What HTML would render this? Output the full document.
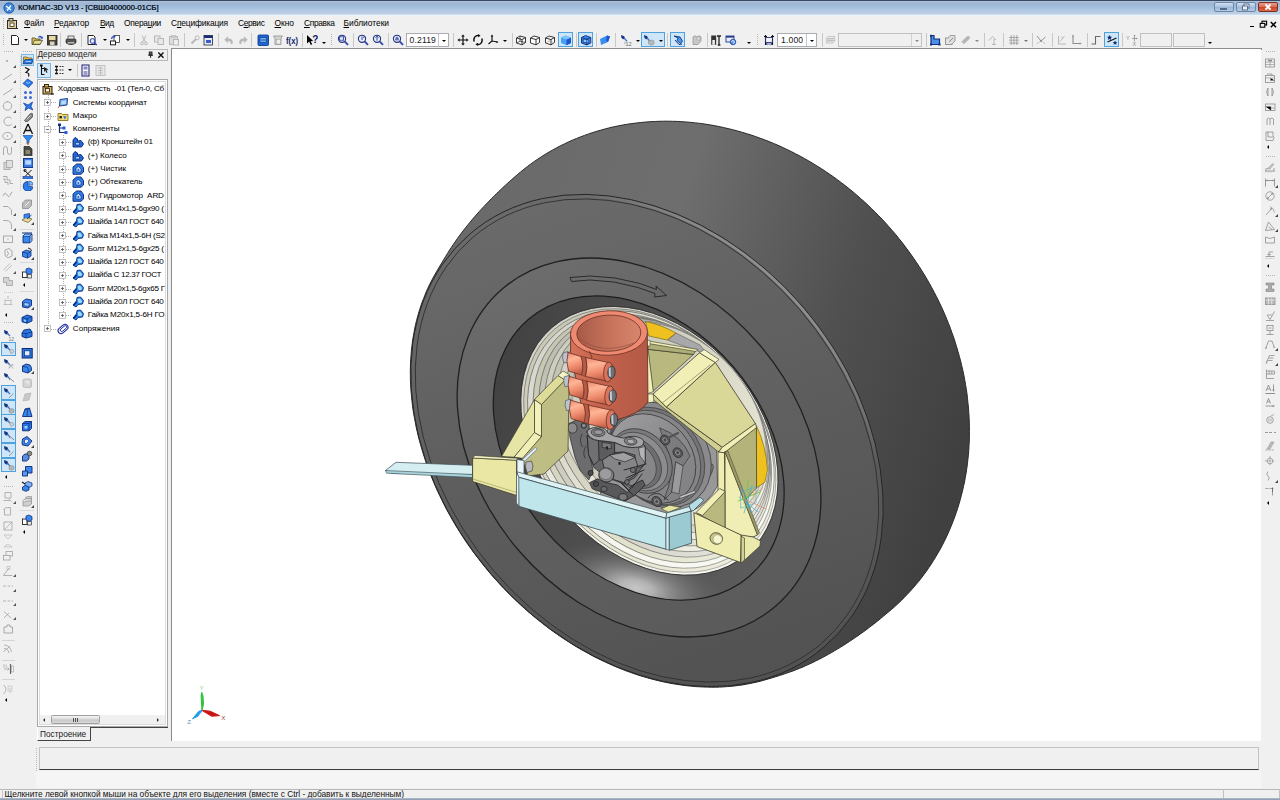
<!DOCTYPE html>
<html><head><meta charset="utf-8"><title>KOMPAS-3D</title>
<style>
html,body{margin:0;padding:0;}
body{width:1280px;height:800px;overflow:hidden;background:#f0f0f0;font-family:"Liberation Sans",sans-serif;position:relative;}
.a{position:absolute;}
.t{position:absolute;white-space:nowrap;color:#000;line-height:1;}

.sep{position:absolute;width:1px;background:#c8c8c8;}
.hl{position:absolute;background:#cfe6f8;border:1px solid #4fa2de;box-sizing:border-box;}
.fld{position:absolute;background:#fff;border:1px solid #abadb3;box-sizing:border-box;}
.fldg{position:absolute;background:#f0f0f0;border:1px solid #c0c0c0;box-sizing:border-box;}
.tr{position:absolute;white-space:pre;font-size:8.1px;line-height:10px;color:#000;}
.mn{position:absolute;white-space:nowrap;font-size:8.4px;line-height:10px;color:#000;top:18px;}
.mn u{text-decoration:underline;text-decoration-thickness:0.6px;text-underline-offset:1px;}
.grip{position:absolute;}

</style></head><body>
<div class="a" style="left:0;top:0;width:1280px;height:16px;background:linear-gradient(to bottom,#34455d 0,#3a4c66 0.9px,#afc2da 1.3px,#a6bad4 2.2px,#a0b6d1 3.5px,#a0bbd9 6px,#a8c4e0 8.5px,#b2cae3 10.5px,#bacde2 12.5px,#c0d0e2 14.2px,#e6f0fb 14.9px,#ecf4fc 15.6px,#f0f0f0 16px);"></div>
<svg class="a" style="left:3px;top:2px" width="12" height="12" viewBox="0 0 12 12"><circle cx="6" cy="6" r="5.2" fill="#3d86d8" stroke="#1b4f9c" stroke-width="0.8"/><path d="M3 4 L8 8 M8 3.5 L4 8.5" stroke="#fff" stroke-width="1.3" fill="none"/></svg>
<div class="t" style="left:18px;top:3.5px;font-size:7.7px;color:#0f1828;letter-spacing:-0.03px;text-shadow:0.2px 0 0 #0f1828;">КОМПАС-3D V13 - [СВШ0400000-01СБ]</div>
<div class="a" style="left:1214px;top:2px;width:20px;height:10px;border:1px solid #6d86a6;border-radius:2px;box-sizing:border-box;background:linear-gradient(#cfe0f1,#a8c2e0 50%,#98b6d8 50%,#b4cde8);"></div>
<div class="a" style="left:1220px;top:8px;width:7px;height:2px;background:#fff;border:0.5px solid #566b88;box-sizing:border-box;"></div>
<div class="a" style="left:1236px;top:2px;width:20px;height:10px;border:1px solid #6d86a6;border-radius:2px;box-sizing:border-box;background:linear-gradient(#cfe0f1,#a8c2e0 50%,#98b6d8 50%,#b4cde8);"></div>
<svg class="a" style="left:1241px;top:3px" width="10" height="8" viewBox="0 0 10 8"><rect x="3" y="1" width="5" height="4" fill="#e8eef6" stroke="#465a78" stroke-width="0.8"/><rect x="1.5" y="3" width="5" height="4" fill="#e8eef6" stroke="#465a78" stroke-width="0.8"/></svg>
<div class="a" style="left:1258px;top:2px;width:20px;height:10px;border:1px solid #7a3024;border-radius:2px;box-sizing:border-box;background:linear-gradient(#e9a090,#d76a52 50%,#c6432a 50%,#d9674c);"></div>
<svg class="a" style="left:1263px;top:3px" width="10" height="8" viewBox="0 0 10 8"><path d="M2.5 1.5 L7.5 6.5 M7.5 1.5 L2.5 6.5" stroke="#fff" stroke-width="1.8"/></svg>
<div class="a" style="left:3px;top:18px;width:1px;height:11px;background:repeating-linear-gradient(to bottom,#b4b4b4 0 1px,transparent 1px 2px);"></div>
<svg class="a" style="left:6px;top:17px" width="13" height="13" viewBox="0 0 13 13"><rect x="1.5" y="3.5" width="9" height="8" fill="#e8d49a" stroke="#2a2a2a" stroke-width="1"/><rect x="3" y="1.5" width="4" height="2.5" fill="#e8d49a" stroke="#2a2a2a" stroke-width="0.9"/><rect x="4" y="6" width="4" height="3.5" fill="#fff" stroke="#2a2a2a" stroke-width="0.8"/><path d="M9 11.5 l3 0" stroke="#2a2a2a" stroke-width="1"/></svg>
<div class="mn" style="left:24px;letter-spacing:-0.152px;"><u>Ф</u>айл</div>
<div class="mn" style="left:54px;letter-spacing:-0.133px;"><u>Р</u>едактор</div>
<div class="mn" style="left:100px;letter-spacing:-0.557px;"><u>В</u>ид</div>
<div class="mn" style="left:124px;letter-spacing:-0.273px;">Опера<u>ц</u>ии</div>
<div class="mn" style="left:171px;letter-spacing:-0.152px;">С<u>п</u>ецификация</div>
<div class="mn" style="left:238px;letter-spacing:-0.37px;">С<u>е</u>рвис</div>
<div class="mn" style="left:274.5px;letter-spacing:0.008px;"><u>О</u>кно</div>
<div class="mn" style="left:304px;letter-spacing:-0.339px;"><u>С</u>правка</div>
<div class="mn" style="left:343.5px;letter-spacing:0.011px;"><u>Б</u>иблиотеки</div>
<div class="a" style="left:1250px;top:25.5px;width:4px;height:1.6px;background:#000;"></div>
<svg class="a" style="left:1259px;top:20px" width="9" height="9" viewBox="0 0 9 9"><rect x="3" y="1.2" width="4.6" height="3.8" fill="none" stroke="#000" stroke-width="1.1"/><rect x="1.2" y="3.4" width="4.6" height="3.8" fill="#f0f0f0" stroke="#000" stroke-width="1.1"/></svg>
<svg class="a" style="left:1269px;top:20px" width="9" height="9" viewBox="0 0 9 9"><path d="M1.8 2 L7 7.2 M7 2 L1.8 7.2" stroke="#000" stroke-width="1.5"/></svg>
<div class="a" style="left:3px;top:34px;width:1px;height:11px;background:repeating-linear-gradient(to bottom,#b4b4b4 0 1px,transparent 1px 2px);"></div>
<svg class="a" style="left:9.0px;top:33.5px" width="12" height="12" viewBox="0 0 12 12"><path d="M2.5 1.5 h5 l2 2 v7 h-7 z" fill="#fff" stroke="#222" stroke-width="1"/></svg>
<div class="a" style="left:24px;top:38.5px;width:0;height:0;border-left:2px solid transparent;border-right:2px solid transparent;border-top:2.5px solid #000;"></div>
<svg class="a" style="left:31.0px;top:33.5px" width="12" height="12" viewBox="0 0 12 12"><path d="M1 4 h3 l1 1 h4 v5.5 h-8 z" fill="#d8c060" stroke="#4a4a20" stroke-width="0.8"/><path d="M1.5 10.3 l2-4 h8 l-2.5 4 z" fill="#e8dc90" stroke="#4a4a20" stroke-width="0.8"/><path d="M7 3 q2-2.5 4 0 l0.8-0.8 v2.6 h-2.6 l0.8-0.8 q-1-1.4-2.2-0.2z" fill="#2a50c8"/></svg>
<svg class="a" style="left:45.5px;top:33.5px" width="12" height="12" viewBox="0 0 12 12"><rect x="1.5" y="1.5" width="9.5" height="9.5" fill="#4a4432" stroke="#222" stroke-width="0.8"/><rect x="3" y="2" width="6.5" height="4" fill="#e8d8a8"/><rect x="4" y="7.5" width="4.5" height="3.5" fill="#d8d0c0"/></svg>
<div class="sep" style="left:60px;top:33px;height:14px;"></div>
<svg class="a" style="left:65.0px;top:33.5px" width="12" height="12" viewBox="0 0 12 12"><ellipse cx="6" cy="8" rx="5.3" ry="3" fill="#3a3a3a"/><rect x="3" y="2" width="6" height="3.5" fill="#e8e8e0" stroke="#333" stroke-width="0.7"/><rect x="1" y="5" width="10" height="3.5" rx="1" fill="#555" stroke="#222" stroke-width="0.6"/><rect x="2.5" y="8.2" width="7" height="1.3" fill="#d8d8c8"/></svg>
<div class="sep" style="left:81px;top:33px;height:14px;"></div>
<svg class="a" style="left:86.0px;top:33.5px" width="12" height="12" viewBox="0 0 12 12"><path d="M2 1.5 h5.5 l1.5 1.5 v7.5 h-7 z" fill="#fff" stroke="#222" stroke-width="1"/><circle cx="6.5" cy="7" r="2.4" fill="#dde6ff" stroke="#2a3aa8" stroke-width="1"/><path d="M8.3 8.8 l2.4 2.2" stroke="#2a3aa8" stroke-width="1.4"/></svg>
<div class="a" style="left:102.5px;top:38.5px;width:0;height:0;border-left:2px solid transparent;border-right:2px solid transparent;border-top:2.5px solid #000;"></div>
<svg class="a" style="left:109.0px;top:33.5px" width="12" height="12" viewBox="0 0 12 12"><rect x="5" y="1.5" width="5.5" height="7" fill="#fff" stroke="#333" stroke-width="0.8"/><rect x="1.5" y="7" width="5" height="3.8" fill="#fff" stroke="#222" stroke-width="1"/><path d="M2 5 q0-3 3-3 l-0.2-1 2 1.6 -2 1.6 -0.2-1 q-1.4 0-1.4 1.8z" fill="#2a50c8"/></svg>
<div class="a" style="left:125.5px;top:38.5px;width:0;height:0;border-left:2px solid transparent;border-right:2px solid transparent;border-top:2.5px solid #000;"></div>
<div class="sep" style="left:134px;top:33px;height:14px;"></div>
<svg class="a" style="left:137.5px;top:33.5px" width="12" height="12" viewBox="0 0 12 12"><path d="M4 1.5 L7.5 8 M8 1.5 L4.5 8" stroke="#b8b8b8" stroke-width="1"/><circle cx="4" cy="9.5" r="1.4" fill="none" stroke="#b8b8b8"/><circle cx="8" cy="9.5" r="1.4" fill="none" stroke="#b8b8b8"/></svg>
<svg class="a" style="left:152.5px;top:33.5px" width="12" height="12" viewBox="0 0 12 12"><rect x="1.5" y="2" width="5.5" height="6" fill="#e8e8e8" stroke="#b8b8b8"/><rect x="5" y="4.5" width="5.5" height="6" fill="#e8e8e8" stroke="#b8b8b8"/></svg>
<svg class="a" style="left:167.5px;top:33.5px" width="12" height="12" viewBox="0 0 12 12"><rect x="1.5" y="2.5" width="8" height="8" fill="#dcdcdc" stroke="#b8b8b8"/><rect x="3.5" y="1.5" width="4" height="2" fill="#ccc" stroke="#b8b8b8" stroke-width="0.6"/><rect x="5.5" y="5.5" width="5" height="5.5" fill="#eee" stroke="#b8b8b8"/></svg>
<div class="sep" style="left:183.5px;top:33px;height:14px;"></div>
<svg class="a" style="left:188.5px;top:33.5px" width="12" height="12" viewBox="0 0 12 12"><path d="M2.5 9.5 L7 5" stroke="#b8b8b8" stroke-width="2"/><circle cx="8.2" cy="3.8" r="2" fill="none" stroke="#b8b8b8" stroke-width="1"/></svg>
<svg class="a" style="left:201.5px;top:33.5px" width="12" height="12" viewBox="0 0 12 12"><rect x="2" y="1.5" width="8.5" height="9.5" fill="#e8ecf8" stroke="#223" stroke-width="0.8"/><rect x="2" y="1.5" width="8.5" height="2.5" fill="#1a2a78"/><rect x="4" y="6" width="5" height="3" fill="#3a5ad0"/></svg>
<div class="sep" style="left:217.5px;top:33px;height:14px;"></div>
<svg class="a" style="left:222.5px;top:33.5px" width="12" height="12" viewBox="0 0 12 12"><path d="M9.5 10 q1.5-5.5-4.5-5.5 v-2.2 l-3.6 3.5 3.6 3.5 v-2.2 q3.2 0 2.6 2.9z" fill="#b8b8b8"/></svg>
<svg class="a" style="left:236.5px;top:33.5px" width="12" height="12" viewBox="0 0 12 12"><path d="M2.5 10 q-1.5-5.5 4.5-5.5 v-2.2 l3.6 3.5 -3.6 3.5 v-2.2 q-3.2 0-2.6 2.9z" fill="#b8b8b8"/></svg>
<div class="sep" style="left:251px;top:33px;height:14px;"></div>
<svg class="a" style="left:256.5px;top:33.5px" width="12" height="12" viewBox="0 0 12 12"><rect x="1" y="1" width="10.5" height="10.5" rx="1" fill="#1d66d8" stroke="#123a8a" stroke-width="0.9"/><rect x="3" y="3.5" width="6.5" height="5" fill="#6ab4f4" stroke="#0e2c70" stroke-width="0.6"/><path d="M3.5 6 h5.5" stroke="#0e2c70" stroke-width="0.7"/></svg>
<svg class="a" style="left:271.5px;top:33.5px" width="12" height="12" viewBox="0 0 12 12"><path d="M1.5 2 h9 l-1.5 2 v6.5 h-6 v-6.5 z" fill="#d4d4d0" stroke="#999" stroke-width="0.9"/><rect x="4.5" y="5.5" width="4" height="4.5" fill="#eee" stroke="#aaa" stroke-width="0.6"/></svg>
<svg class="a" style="left:286.0px;top:33.5px" width="12" height="12" viewBox="0 0 12 12"><text x="0" y="9.6" font-family="Liberation Sans" font-size="9.5" fill="#10206a" font-weight="bold" textLength="12" lengthAdjust="spacingAndGlyphs">f(x)</text></svg>
<div class="sep" style="left:302px;top:33px;height:14px;"></div>
<svg class="a" style="left:306.0px;top:33.5px" width="12" height="12" viewBox="0 0 12 12"><path d="M1 1 L1 9.5 L3.2 7.6 L4.8 11 L6.2 10.3 L4.6 7.2 L7.2 7 z" fill="#000"/><text x="6.2" y="8.5" font-family="Liberation Sans" font-size="10" font-weight="bold" fill="#10206a">?</text></svg>
<div class="a" style="left:322px;top:41.5px;width:0;height:0;border-left:2px solid transparent;border-right:2px solid transparent;border-top:2.5px solid #000;"></div>
<div class="a" style="left:331px;top:34px;width:1px;height:11px;background:repeating-linear-gradient(to bottom,#b4b4b4 0 1px,transparent 1px 2px);"></div>
<svg class="a" style="left:337.0px;top:33.5px" width="12" height="12" viewBox="0 0 12 12"><circle cx="5" cy="4.8" r="3.6" fill="#e6ecfa" stroke="#26357c" stroke-width="1.1"/><rect x="2.6" y="2.8" width="4" height="3.4" fill="none" stroke="#223a9a" stroke-width="0.8"/><path d="M7.6 7.4 L11 10.8" stroke="#3548a8" stroke-width="1.9"/></svg>
<div class="sep" style="left:352.5px;top:33px;height:14px;"></div>
<svg class="a" style="left:357.0px;top:33.5px" width="12" height="12" viewBox="0 0 12 12"><circle cx="5" cy="4.8" r="3.6" fill="#e6ecfa" stroke="#26357c" stroke-width="1.1"/><path d="M5 2.5 v3.5 M6.8 2.5 v1.5" stroke="#223a9a" stroke-width="0.9"/><path d="M7.6 7.4 L11 10.8" stroke="#3548a8" stroke-width="1.9"/></svg>
<svg class="a" style="left:372.0px;top:33.5px" width="12" height="12" viewBox="0 0 12 12"><circle cx="5" cy="4.8" r="3.6" fill="#e6ecfa" stroke="#26357c" stroke-width="1.1"/><path d="M5 2.3 v4.4 M3.6 3.6 L5 2.2 L6.4 3.6" stroke="#223a9a" stroke-width="0.9" fill="none"/><path d="M7.6 7.4 L11 10.8" stroke="#3548a8" stroke-width="1.9"/></svg>
<div class="sep" style="left:387.5px;top:33px;height:14px;"></div>
<svg class="a" style="left:391.5px;top:33.5px" width="12" height="12" viewBox="0 0 12 12"><circle cx="5" cy="4.8" r="3.6" fill="#e6ecfa" stroke="#26357c" stroke-width="1.1"/><path d="M3 5.8 h4 M3.4 4.2 h3.2 M5 2.6 v2" stroke="#223a9a" stroke-width="0.9"/><path d="M7.6 7.4 L11 10.8" stroke="#3548a8" stroke-width="1.9"/></svg>
<div class="fld" style="left:406px;top:33px;width:43px;height:14px;"></div>
<div class="a" style="left:438px;top:34px;width:1px;height:12px;background:#c8c8c8"></div>
<div class="t" style="left:409.5px;top:35.5px;font-size:8.6px;color:#222;letter-spacing:0.15px">0.2119</div>
<div class="a" style="left:442px;top:39.5px;width:0;height:0;border-left:2px solid transparent;border-right:2px solid transparent;border-top:2.5px solid #000;"></div>
<div class="sep" style="left:452.5px;top:33px;height:14px;"></div>
<svg class="a" style="left:456.5px;top:33.5px" width="12" height="12" viewBox="0 0 12 12"><path d="M6 0.5 L7.8 2.6 H6.6 V5.4 H9.4 V4.2 L11.5 6 L9.4 7.8 V6.6 H6.6 V9.4 H7.8 L6 11.5 L4.2 9.4 H5.4 V6.6 H2.6 V7.8 L0.5 6 L2.6 4.2 V5.4 H5.4 V2.6 H4.2 z" fill="#111"/></svg>
<svg class="a" style="left:471.5px;top:33.5px" width="12" height="12" viewBox="0 0 12 12"><path d="M2.2 7.5 A4 4.4 0 0 1 7 1.6" fill="none" stroke="#111" stroke-width="1.5"/><path d="M9.8 4.5 A4 4.4 0 0 1 5 10.4" fill="none" stroke="#111" stroke-width="1.5"/><path d="M6.2 0 l2.4 1.7 -2.6 1.6z M5.8 12 l-2.4-1.7 2.6-1.6z" fill="#111"/></svg>
<svg class="a" style="left:486.5px;top:33.5px" width="12" height="12" viewBox="0 0 12 12"><path d="M5 1.5 V7 L1.5 10 M5 7 L10.5 8" fill="none" stroke="#111" stroke-width="1.2"/><path d="M5 0.5 l1.3 2 h-2.6z M11.5 8.2 l-2.2 0.9 0.3-2z" fill="#111"/></svg>
<div class="a" style="left:503px;top:39.5px;width:0;height:0;border-left:2px solid transparent;border-right:2px solid transparent;border-top:2.5px solid #000;"></div>
<div class="sep" style="left:511.5px;top:33px;height:14px;"></div>
<svg class="a" style="left:514.7px;top:33.5px" width="12" height="12" viewBox="0 0 12 12"><path d="M1.5 4 L5 2 L10.5 3.5 L10.5 8.5 L7 10.8 L1.5 9 z M1.5 4 L7 5.6 L10.5 3.5 M7 5.6 V10.8" fill="#fff" stroke="#222" stroke-width="0.9" stroke-linejoin="round"/><path d="M5 2 V7.2 L1.5 9 M5 7.2 L10.5 8.5" fill="none" stroke="#222" stroke-width="0.7"/></svg>
<svg class="a" style="left:529.4px;top:33.5px" width="12" height="12" viewBox="0 0 12 12"><path d="M1.5 4 L5 2 L10.5 3.5 L10.5 8.5 L7 10.8 L1.5 9 z M1.5 4 L7 5.6 L10.5 3.5 M7 5.6 V10.8" fill="#fff" stroke="#222" stroke-width="0.9" stroke-linejoin="round"/></svg>
<svg class="a" style="left:544.2px;top:33.5px" width="12" height="12" viewBox="0 0 12 12"><path d="M1.5 4 L5 2 L10.5 3.5 L10.5 8.5 L7 10.8 L1.5 9 z M1.5 4 L7 5.6 L10.5 3.5 M7 5.6 V10.8" fill="#fff" stroke="#222" stroke-width="0.9" stroke-linejoin="round"/><path d="M5 2 V7.2 L1.5 9 M5 7.2 L10.5 8.5" fill="none" stroke="#999" stroke-width="0.6"/></svg>
<div class="hl" style="left:558px;top:32px;width:15px;height:15px;"></div>
<svg class="a" style="left:559.5px;top:33.5px" width="12" height="12" viewBox="0 0 12 12"><path d="M1 3.5 L5.5 1.5 L11 3.5 V9 L6.5 11.2 L1 9z" fill="#4aa0f4"/><path d="M6.5 5.6 L11 3.5 V9 L6.5 11.2z" fill="#1a55d0"/><path d="M1 3.5 L5.5 1.5 L11 3.5 L6.5 5.6z" fill="#7cc4ff"/></svg>
<div class="sep" style="left:575.5px;top:33px;height:14px;"></div>
<div class="hl" style="left:578px;top:32px;width:15px;height:15px;"></div>
<svg class="a" style="left:579.5px;top:33.5px" width="12" height="12" viewBox="0 0 12 12"><path d="M1.5 3.5 L5.5 1.5 L10.8 3.5 V9 L6.8 11 L1.5 9z" fill="#3a8ce8" stroke="#0a2a78" stroke-width="0.9" stroke-linejoin="round"/><path d="M3.2 5 L8.8 5.8 V9 L3.2 8.4z" fill="#8cc8ff" stroke="#0a2a78" stroke-width="0.7"/><path d="M1.5 3.5 L6.8 5 L10.8 3.5 M6.8 5 V11" fill="none" stroke="#0a2a78" stroke-width="0.7"/></svg>
<div class="sep" style="left:595.5px;top:33px;height:14px;"></div>
<svg class="a" style="left:599.0px;top:33.5px" width="12" height="12" viewBox="0 0 12 12"><path d="M1 5 L8 1.5 L11 2.5 L9 8 L2 11z" fill="#3a8ef0"/><path d="M8 1.5 L11 2.5 L9 8 L7.2 6.5z" fill="#1a55d0"/></svg>
<div class="sep" style="left:615px;top:33px;height:14px;"></div>
<svg class="a" style="left:619.5px;top:33.5px" width="12" height="12" viewBox="0 0 12 12"><path d="M1 1 L4.2 2.2 L5.2 4.8 L3 5.2 L1.4 3.8z" fill="#16357e"/><path d="M4 4 L7 7.2" stroke="#4a78c8" stroke-width="1.4"/><text x="5.5" y="11.5" font-family="Liberation Sans" font-size="5.5" fill="#666">12</text><path d="M5 7.5 v3" stroke="#888" stroke-width="0.6"/></svg>
<div class="a" style="left:635.5px;top:39.5px;width:0;height:0;border-left:2px solid transparent;border-right:2px solid transparent;border-top:2.5px solid #000;"></div>
<div class="hl" style="left:641px;top:32px;width:24px;height:15px;"></div>
<svg class="a" style="left:642.5px;top:33.5px" width="12" height="12" viewBox="0 0 12 12"><path d="M1 1 L4.2 2.2 L5.2 4.8 L3 5.2 L1.4 3.8z" fill="#16357e"/><path d="M4 4 L7 7.2" stroke="#4a78c8" stroke-width="1.4"/><path d="M5.5 7 L9 6 L11 7 V10 L8 11.3 L5.5 10z" fill="#b8b8b8" stroke="#888" stroke-width="0.5"/></svg>
<div class="a" style="left:659px;top:39.5px;width:0;height:0;border-left:2px solid transparent;border-right:2px solid transparent;border-top:2.5px solid #000;"></div>
<div class="sep" style="left:667px;top:33px;height:14px;"></div>
<div class="hl" style="left:670px;top:32px;width:15px;height:15px;"></div>
<svg class="a" style="left:671.5px;top:33.5px" width="12" height="12" viewBox="0 0 12 12"><path d="M2 2 L6 4 L5 6.5 L8.5 9.5 L10.5 7.2 L8 3z" fill="#4a96ec" stroke="#12357e" stroke-width="0.9" stroke-linejoin="round"/><path d="M3 6 L7 10.5 L10 10" fill="none" stroke="#12357e" stroke-width="1"/></svg>
<svg class="a" style="left:691.0px;top:33.5px" width="12" height="12" viewBox="0 0 12 12"><path d="M2 10.5 V3 q2-2.4 4 0 q2-2.4 4 0 V7 L7 10.5z" fill="#c8c8c8" stroke="#999" stroke-width="0.8"/><circle cx="7.5" cy="4.5" r="1.8" fill="#ddd" stroke="#999" stroke-width="0.6"/></svg>
<div class="sep" style="left:706.5px;top:33px;height:14px;"></div>
<svg class="a" style="left:710.0px;top:33.5px" width="12" height="12" viewBox="0 0 12 12"><rect x="1.2" y="1.5" width="5" height="9.3" fill="#333"/><rect x="2.3" y="6" width="2.6" height="4.8" fill="#eee"/><path d="M7 2 h4 M9 2 v9 M7.8 11 h2.6" stroke="#222" stroke-width="1.3"/></svg>
<svg class="a" style="left:725.0px;top:33.5px" width="12" height="12" viewBox="0 0 12 12"><rect x="1" y="2" width="8" height="6" fill="#e8eef8" stroke="#233a8a" stroke-width="0.9"/><rect x="1" y="2" width="8" height="1.6" fill="#233a8a"/><circle cx="8" cy="8" r="2.8" fill="#4a8ce8" stroke="#1a3a9a" stroke-width="0.7"/><path d="M6.6 8 a1.4 1.4 0 1 1 1.4 1.4" fill="none" stroke="#fff" stroke-width="0.8"/></svg>
<div class="a" style="left:747px;top:41.5px;width:0;height:0;border-left:2px solid transparent;border-right:2px solid transparent;border-top:2.5px solid #000;"></div>
<div class="a" style="left:757px;top:34px;width:1px;height:11px;background:repeating-linear-gradient(to bottom,#b4b4b4 0 1px,transparent 1px 2px);"></div>
<svg class="a" style="left:763.0px;top:33.5px" width="12" height="12" viewBox="0 0 12 12"><path d="M2.5 1 V11 M9.5 1 V11" stroke="#111" stroke-width="1.1"/><path d="M2.5 3.5 H9.5 V8.5 H2.5z" fill="none" stroke="#26357c" stroke-width="0.9"/><path d="M1 2.5 h3 M8 2.5 h3" stroke="#111" stroke-width="1"/><path d="M3 10 h6 M3 10 l1.3-1 M3 10 l1.3 1 M9 10 l-1.3-1 M9 10 l-1.3 1" stroke="#26357c" stroke-width="0.7" fill="none"/></svg>
<div class="fld" style="left:776.5px;top:33px;width:40px;height:14px;"></div>
<div class="a" style="left:806px;top:34px;width:1px;height:12px;background:#c8c8c8"></div>
<div class="t" style="left:781px;top:35.5px;font-size:8.6px;color:#222;letter-spacing:0.15px">1.000</div>
<div class="a" style="left:809.5px;top:39.5px;width:0;height:0;border-left:2px solid transparent;border-right:2px solid transparent;border-top:2.5px solid #000;"></div>
<div class="sep" style="left:822px;top:33px;height:14px;"></div>
<svg class="a" style="left:824.0px;top:33.5px" width="12" height="12" viewBox="0 0 12 12"><path d="M2 9 L4 6.5 H11 L9 9z M2 7 L4 4.5 H11 L9 7z M2 5 L4 2.5 H11 L9 5z" fill="#ececec" stroke="#b8b8b8" stroke-width="0.7"/></svg>
<div class="fldg" style="left:838px;top:33px;width:84px;height:14px;"></div>
<div class="a" style="left:911px;top:34px;width:1px;height:12px;background:#d0d0d0"></div>
<div class="a" style="left:914.5px;top:39.5px;width:0;height:0;border-left:2px solid transparent;border-right:2px solid transparent;border-top:2.5px solid #888;"></div>
<div class="sep" style="left:926px;top:33px;height:14px;"></div>
<svg class="a" style="left:929.0px;top:33.5px" width="12" height="12" viewBox="0 0 12 12"><path d="M2 1.5 H5 V5 H10.5 V10.5 H2z" fill="#4a90e8" stroke="#12307a" stroke-width="1.2"/><rect x="1" y="0.8" width="2" height="2" fill="#12307a"/><rect x="1" y="9.5" width="2" height="2" fill="#12307a"/><rect x="9.5" y="9.5" width="2" height="2" fill="#12307a"/></svg>
<svg class="a" style="left:944.0px;top:33.5px" width="12" height="12" viewBox="0 0 12 12"><rect x="1.5" y="4" width="6.5" height="6.5" fill="#e4e4e4" stroke="#8e8e8e" stroke-width="0.9"/><path d="M4 4 L6 1.5 H11 V7 L8 10" fill="#ddd" stroke="#8e8e8e" stroke-width="0.8"/><path d="M5 8 L9 4" stroke="#8e8e8e" stroke-width="1"/></svg>
<svg class="a" style="left:960.0px;top:33.5px" width="12" height="12" viewBox="0 0 12 12"><path d="M1.5 8 L7 2.5 q2-1 3 1 L5 9z" fill="#b4b4b4" stroke="#b8b8b8" stroke-width="0.6"/><path d="M3 9.8 L8.5 5" stroke="#b8b8b8" stroke-width="1.2"/></svg>
<div class="a" style="left:975px;top:39.5px;width:0;height:0;border-left:2px solid transparent;border-right:2px solid transparent;border-top:2.5px solid #888;"></div>
<div class="sep" style="left:984px;top:33px;height:14px;"></div>
<svg class="a" style="left:986.5px;top:33.5px" width="12" height="12" viewBox="0 0 12 12"><path d="M2 6.5 L5.5 2.5 L9 6" fill="none" stroke="#b8b8b8" stroke-width="1"/><path d="M7 5 V10.5 M5 10.5 H9" stroke="#b8b8b8" stroke-width="1.1"/></svg>
<div class="sep" style="left:1003px;top:33px;height:14px;"></div>
<svg class="a" style="left:1008.0px;top:33.5px" width="12" height="12" viewBox="0 0 12 12"><path d="M1 3.5 H11 M1 6.2 H11 M1 9 H11 M3.2 1 V11 M6 1 V11 M8.8 1 V11" stroke="#8e8e8e" stroke-width="0.7"/></svg>
<div class="a" style="left:1023.5px;top:39.5px;width:0;height:0;border-left:2px solid transparent;border-right:2px solid transparent;border-top:2.5px solid #777;"></div>
<div class="sep" style="left:1032px;top:33px;height:14px;"></div>
<svg class="a" style="left:1035.0px;top:33.5px" width="12" height="12" viewBox="0 0 12 12"><path d="M2 2 L6 7 L10.5 3" fill="none" stroke="#8e8e8e" stroke-width="1"/><path d="M2 10 q4-5 8 0" fill="none" stroke="#8e8e8e" stroke-width="0.8" stroke-dasharray="1.2 1"/><circle cx="6" cy="7" r="0.9" fill="#8e8e8e"/></svg>
<div class="sep" style="left:1052px;top:33px;height:14px;"></div>
<svg class="a" style="left:1055.0px;top:33.5px" width="12" height="12" viewBox="0 0 12 12"><path d="M3.5 2 V10 H11" fill="none" stroke="#b8b8b8" stroke-width="1"/><path d="M5 7.5 L9.5 2 M6 2.5 L8 4.5" stroke="#b8b8b8" stroke-width="0.9"/></svg>
<svg class="a" style="left:1070.0px;top:33.5px" width="12" height="12" viewBox="0 0 12 12"><path d="M3 1.5 V9.5 H11" fill="none" stroke="#8e8e8e" stroke-width="1.1"/><path d="M3 0.5 l1 2 h-2z M11.8 9.5 l-2 1 v-2z" fill="#8e8e8e"/></svg>
<div class="sep" style="left:1086.5px;top:33px;height:14px;"></div>
<svg class="a" style="left:1089.5px;top:33.5px" width="12" height="12" viewBox="0 0 12 12"><path d="M1.5 10 H5.5 V2.5 H10.5" fill="none" stroke="#6a6a6a" stroke-width="1.1"/></svg>
<div class="hl" style="left:1104px;top:32px;width:15px;height:15px;"></div>
<svg class="a" style="left:1105.5px;top:33.5px" width="12" height="12" viewBox="0 0 12 12"><path d="M1.5 8 L10.5 4" stroke="#111" stroke-width="1.1"/><path d="M3.5 1 l0.9 1.6 1.7 0.3 -1.3 1.2 0.4 1.8 -1.7-0.9 -1.6 0.9 0.4-1.8 -1.3-1.2 1.7-0.3z M9 6.5 l0.8 1.4 1.5 0.3 -1.1 1 0.3 1.6 -1.5-0.8 -1.4 0.8 0.3-1.6 -1.1-1 1.5-0.3z" fill="#12307a"/></svg>
<div class="sep" style="left:1121.5px;top:33px;height:14px;"></div>
<svg class="a" style="left:1126.0px;top:33.5px" width="12" height="12" viewBox="0 0 12 12"><text x="0" y="5.5" font-family="Liberation Sans" font-size="5.5" fill="#8e8e8e">Y</text><text x="6.5" y="12" font-family="Liberation Sans" font-size="5.5" fill="#8e8e8e">X</text><path d="M8.5 1.5 V7.5 M6 4.5 H11" stroke="#8e8e8e" stroke-width="0.8"/><path d="M8.5 0.5 l1 1.6 h-2z M11.8 4.5 l-1.6 1 v-2z" fill="#8e8e8e"/></svg>
<div class="fldg" style="left:1139.5px;top:33px;width:32px;height:14px;"></div>
<div class="fldg" style="left:1172.5px;top:33px;width:32px;height:14px;"></div>
<div class="a" style="left:1207.5px;top:41.5px;width:0;height:0;border-left:2px solid transparent;border-right:2px solid transparent;border-top:2.5px solid #000;"></div>
<div class="a" style="left:4px;top:51px;width:9px;height:1px;background:repeating-linear-gradient(to right,#b4b4b4 0 1px,transparent 1px 2px);"></div>
<div class="a" style="left:23px;top:51px;width:9px;height:1px;background:repeating-linear-gradient(to right,#b4b4b4 0 1px,transparent 1px 2px);"></div>
<svg class="a" style="left:1.5px;top:56.0px" width="12" height="12" viewBox="0 0 12 12"><circle cx="5" cy="5" r="1" fill="#a2a2a2"/></svg>
<svg class="a" style="left:1.5px;top:71.0px" width="12" height="12" viewBox="0 0 12 12"><path d="M1 9 L10 3" stroke="#a2a2a2" stroke-width="0.9"/></svg>
<svg class="a" style="left:1.5px;top:86.0px" width="12" height="12" viewBox="0 0 12 12"><path d="M1 9 L9 4 M9 4 l1.5-1.5" stroke="#a2a2a2" stroke-width="0.9"/></svg>
<svg class="a" style="left:1.5px;top:100.0px" width="12" height="12" viewBox="0 0 12 12"><circle cx="5.5" cy="6" r="4.2" fill="none" stroke="#a2a2a2" stroke-width="0.9"/><path d="M5.5 1 v1" stroke="#a2a2a2"/></svg>
<svg class="a" style="left:1.5px;top:115.0px" width="12" height="12" viewBox="0 0 12 12"><path d="M9.5 3.5 A4.3 4.3 0 1 0 9.8 8.8" fill="none" stroke="#a2a2a2" stroke-width="0.9"/></svg>
<svg class="a" style="left:1.5px;top:130.0px" width="12" height="12" viewBox="0 0 12 12"><ellipse cx="5.5" cy="6" rx="4.8" ry="3.6" fill="none" stroke="#a2a2a2" stroke-width="0.9"/><circle cx="5.5" cy="6" r="0.7" fill="#a2a2a2"/></svg>
<svg class="a" style="left:1.5px;top:144.5px" width="12" height="12" viewBox="0 0 12 12"><path d="M1.5 10 V4 q0-2.5 2-2.5 t2 2.5 v3 q0 2.5 2 2.5 t2-2.5 V2" fill="none" stroke="#a2a2a2" stroke-width="0.9"/></svg>
<svg class="a" style="left:1.5px;top:159.0px" width="12" height="12" viewBox="0 0 12 12"><rect x="2" y="3.5" width="6" height="7" fill="#d8d8d8" stroke="#a2a2a2" stroke-width="0.8"/><rect x="4.5" y="1.5" width="6" height="7" fill="#e0e0e0" stroke="#a2a2a2" stroke-width="0.8"/></svg>
<svg class="a" style="left:1.5px;top:173.5px" width="12" height="12" viewBox="0 0 12 12"><path d="M1 2.5 H5 V6 H8 V9.5 H11 M1 5 H3 V8.5 H6 V11" fill="none" stroke="#a2a2a2" stroke-width="0.9"/></svg>
<svg class="a" style="left:1.5px;top:188.0px" width="12" height="12" viewBox="0 0 12 12"><path d="M1 8 q2-5 4-1 t4-2 l1.5-1" fill="none" stroke="#a2a2a2" stroke-width="0.9"/></svg>
<svg class="a" style="left:1.5px;top:203.5px" width="12" height="12" viewBox="0 0 12 12"><path d="M1 2.5 H6 L9.5 6 V11" fill="none" stroke="#a2a2a2" stroke-width="0.9"/></svg>
<svg class="a" style="left:1.5px;top:218.0px" width="12" height="12" viewBox="0 0 12 12"><path d="M1 2.5 H4 q5.5 0 5.5 5.5 V11" fill="none" stroke="#a2a2a2" stroke-width="0.9"/></svg>
<svg class="a" style="left:1.5px;top:233.0px" width="12" height="12" viewBox="0 0 12 12"><rect x="1.5" y="3" width="9" height="6.5" fill="none" stroke="#a2a2a2" stroke-width="0.9"/><circle cx="6" cy="6.2" r="0.6" fill="#a2a2a2"/></svg>
<svg class="a" style="left:1.5px;top:246.5px" width="12" height="12" viewBox="0 0 12 12"><path d="M3 3 L7 1.5 L10 4 V9 L6 10.8 L3 8.5z M5 4 q3 2 0 5" fill="none" stroke="#a2a2a2" stroke-width="0.9"/></svg>
<svg class="a" style="left:1.5px;top:260.5px" width="12" height="12" viewBox="0 0 12 12"><path d="M1.5 9 L8 2.5 M3.5 10.5 L10 4" stroke="#b8b8b8" stroke-width="0.9"/></svg>
<svg class="a" style="left:1.5px;top:275.0px" width="12" height="12" viewBox="0 0 12 12"><path d="M1.5 2.5 H7 V5.5 H10.5 V10.5 H4.5 V7.5 H1.5z" fill="#d4d4d4" stroke="#a2a2a2" stroke-width="0.8"/></svg>
<div class="a" style="left:12.5px;top:65px;width:0;height:0;border-left:3px solid transparent;border-bottom:3px solid #555;"></div>
<div class="a" style="left:12.5px;top:80px;width:0;height:0;border-left:3px solid transparent;border-bottom:3px solid #555;"></div>
<div class="a" style="left:12.5px;top:95px;width:0;height:0;border-left:3px solid transparent;border-bottom:3px solid #555;"></div>
<div class="a" style="left:12.5px;top:110px;width:0;height:0;border-left:3px solid transparent;border-bottom:3px solid #555;"></div>
<div class="a" style="left:12.5px;top:125px;width:0;height:0;border-left:3px solid transparent;border-bottom:3px solid #555;"></div>
<div class="a" style="left:12.5px;top:140px;width:0;height:0;border-left:3px solid transparent;border-bottom:3px solid #555;"></div>
<div class="a" style="left:12.5px;top:213px;width:0;height:0;border-left:3px solid transparent;border-bottom:3px solid #555;"></div>
<div class="a" style="left:12.5px;top:228px;width:0;height:0;border-left:3px solid transparent;border-bottom:3px solid #555;"></div>
<div class="a" style="left:12.5px;top:257px;width:0;height:0;border-left:3px solid transparent;border-bottom:3px solid #555;"></div>
<div class="a" style="left:12.5px;top:271px;width:0;height:0;border-left:3px solid transparent;border-bottom:3px solid #555;"></div>
<div class="a" style="left:4px;top:291.5px;width:10px;height:1px;background:repeating-linear-gradient(to right,#c8c8c8 0 1px,transparent 1px 2px);"></div>
<svg class="a" style="left:1.5px;top:295.0px" width="12" height="12" viewBox="0 0 12 12"><path d="M1.5 9.5 H10.5 M3 9.5 V4 M9 9.5 V4 M3 5.5 H9" fill="none" stroke="#b8b8b8" stroke-width="0.8"/><path d="M6 1 v3" stroke="#b8b8b8"/></svg>
<div class="a" style="left:5px;top:312.5px;width:0;height:0;border-top:2px solid transparent;border-bottom:2px solid transparent;border-right:2.5px solid #000;"></div>
<div class="a" style="left:4px;top:322px;width:9px;height:1px;background:repeating-linear-gradient(to right,#b4b4b4 0 1px,transparent 1px 2px);"></div>
<svg class="a" style="left:2.5px;top:328.5px" width="12" height="12" viewBox="0 0 12 12"><path d="M1 1 L4.5 2.2 L5.5 5 L3 5.4 L1.4 4z" fill="#16357e"/><path d="M4.2 4.2 L7 7" stroke="#4a78c8" stroke-width="1.3"/><text x="5.5" y="11.5" font-family="Liberation Sans" font-size="5" fill="#777">12</text></svg>
<div class="hl" style="left:1px;top:341.8px;width:15px;height:14.4px;"></div>
<svg class="a" style="left:2.5px;top:343.0px" width="12" height="12" viewBox="0 0 12 12"><path d="M1 1 L4.5 2.2 L5.5 5 L3 5.4 L1.4 4z" fill="#16357e"/><path d="M4.2 4.2 L7 7" stroke="#4a78c8" stroke-width="1.3"/><path d="M6.5 7.5 l3-1.2 1.5 2.5 -3 1.8z" fill="#d8d8d8" stroke="#888" stroke-width="0.6"/></svg>
<svg class="a" style="left:2.5px;top:357.5px" width="12" height="12" viewBox="0 0 12 12"><path d="M1 1 L4.5 2.2 L5.5 5 L3 5.4 L1.4 4z" fill="#16357e"/><path d="M4.2 4.2 L7 7" stroke="#4a78c8" stroke-width="1.3"/><path d="M6 10.5 q1-4 4.5-3.5" fill="none" stroke="#888" stroke-width="0.8"/><path d="M7 7.5 l3.5 3" stroke="#999" stroke-width="0.7"/></svg>
<svg class="a" style="left:2.5px;top:372.0px" width="12" height="12" viewBox="0 0 12 12"><path d="M1 1 L4.5 2.2 L5.5 5 L3 5.4 L1.4 4z" fill="#16357e"/><path d="M4.2 4.2 L7 7" stroke="#4a78c8" stroke-width="1.3"/><path d="M6 8 q2-2 3 0 t2 1.5" fill="none" stroke="#777" stroke-width="0.8"/></svg>
<div class="hl" style="left:1px;top:385.3px;width:15px;height:14.4px;"></div>
<svg class="a" style="left:2.5px;top:386.5px" width="12" height="12" viewBox="0 0 12 12"><path d="M1 1 L4.5 2.2 L5.5 5 L3 5.4 L1.4 4z" fill="#16357e"/><path d="M4.2 4.2 L7 7" stroke="#4a78c8" stroke-width="1.3"/><path d="M6 11 L10.5 6.5" stroke="#999" stroke-width="1"/></svg>
<div class="hl" style="left:1px;top:400.3px;width:15px;height:14.4px;"></div>
<svg class="a" style="left:2.5px;top:401.5px" width="12" height="12" viewBox="0 0 12 12"><path d="M1 1 L4.5 2.2 L5.5 5 L3 5.4 L1.4 4z" fill="#16357e"/><path d="M4.2 4.2 L7 7" stroke="#4a78c8" stroke-width="1.3"/><path d="M6 7.5 L9 6.5 L11 7.5 V10.2 L8.2 11.4 L6 10.2z" fill="#b4b4b4" stroke="#888" stroke-width="0.5"/></svg>
<div class="hl" style="left:1px;top:414.3px;width:15px;height:14.4px;"></div>
<svg class="a" style="left:2.5px;top:415.5px" width="12" height="12" viewBox="0 0 12 12"><path d="M1 1 L4.5 2.2 L5.5 5 L3 5.4 L1.4 4z" fill="#16357e"/><path d="M4.2 4.2 L7 7" stroke="#4a78c8" stroke-width="1.3"/><path d="M6.5 7.5 l3-1.2 1.5 2.5 -3 1.8z" fill="#d8d8d8" stroke="#888" stroke-width="0.6"/></svg>
<div class="hl" style="left:1px;top:428.8px;width:15px;height:14.4px;"></div>
<svg class="a" style="left:2.5px;top:430.0px" width="12" height="12" viewBox="0 0 12 12"><path d="M1 1 L4.5 2.2 L5.5 5 L3 5.4 L1.4 4z" fill="#16357e"/><path d="M4.2 4.2 L7 7" stroke="#4a78c8" stroke-width="1.3"/><path d="M6 8 q2-2 3 0 t2 1.5" fill="none" stroke="#777" stroke-width="0.8"/></svg>
<div class="hl" style="left:1px;top:443.3px;width:15px;height:14.4px;"></div>
<svg class="a" style="left:2.5px;top:444.5px" width="12" height="12" viewBox="0 0 12 12"><path d="M1 1 L4.5 2.2 L5.5 5 L3 5.4 L1.4 4z" fill="#16357e"/><path d="M4.2 4.2 L7 7" stroke="#4a78c8" stroke-width="1.3"/><path d="M6 11 L10.5 6.5" stroke="#999" stroke-width="1"/></svg>
<div class="hl" style="left:1px;top:457.8px;width:15px;height:14.4px;"></div>
<svg class="a" style="left:2.5px;top:459.0px" width="12" height="12" viewBox="0 0 12 12"><path d="M1 1 L4.5 2.2 L5.5 5 L3 5.4 L1.4 4z" fill="#16357e"/><path d="M4.2 4.2 L7 7" stroke="#4a78c8" stroke-width="1.3"/><path d="M6 7.5 L9 6.5 L11 7.5 V10.2 L8.2 11.4 L6 10.2z" fill="#b4b4b4" stroke="#888" stroke-width="0.5"/></svg>
<div class="a" style="left:5px;top:474.5px;width:0;height:0;border-top:2px solid transparent;border-bottom:2px solid transparent;border-right:2.5px solid #000;"></div>
<div class="a" style="left:4px;top:485.5px;width:9px;height:1px;background:repeating-linear-gradient(to right,#b4b4b4 0 1px,transparent 1px 2px);"></div>
<svg class="a" style="left:2.0px;top:490.5px" width="12" height="12" viewBox="0 0 12 12"><path d="M3 1.5 H9 V7 H3z M1.5 9.5 H7.5" fill="none" stroke="#a2a2a2" stroke-width="0.8"/><path d="M6.5 8 l3 2.5" stroke="#a2a2a2" stroke-width="0.8"/></svg>
<svg class="a" style="left:2.0px;top:505.0px" width="12" height="12" viewBox="0 0 12 12"><path d="M2.5 4 V10 H8.5 V2.5 H6" fill="none" stroke="#a2a2a2" stroke-width="0.8"/><path d="M1.5 5 q2-4 5-2" fill="none" stroke="#a2a2a2" stroke-width="0.8"/></svg>
<svg class="a" style="left:2.0px;top:520.0px" width="12" height="12" viewBox="0 0 12 12"><rect x="2" y="2" width="8" height="8" fill="none" stroke="#a2a2a2" stroke-width="0.8"/><path d="M2 10 L10 2" stroke="#a2a2a2" stroke-width="0.7"/></svg>
<svg class="a" style="left:2.0px;top:531.0px" width="12" height="12" viewBox="0 0 12 12"><path d="M2 4 H10 L6 8z" fill="none" stroke="#b8b8b8" stroke-width="0.7"/></svg>
<svg class="a" style="left:2.0px;top:538.5px" width="12" height="12" viewBox="0 0 12 12"><path d="M2 8 q4-5 8 0z" fill="none" stroke="#b8b8b8" stroke-width="0.7"/></svg>
<svg class="a" style="left:2.0px;top:550.0px" width="12" height="12" viewBox="0 0 12 12"><rect x="4" y="1.5" width="6.5" height="4.5" fill="none" stroke="#a2a2a2" stroke-width="0.8"/><rect x="1.5" y="5.5" width="6.5" height="4.5" fill="#f0f0f0" stroke="#a2a2a2" stroke-width="0.8"/></svg>
<svg class="a" style="left:2.0px;top:565.0px" width="12" height="12" viewBox="0 0 12 12"><path d="M1.5 10.5 H10.5 M1.5 10.5 L7 3" fill="none" stroke="#a2a2a2" stroke-width="0.8"/><rect x="5" y="1.5" width="3" height="3" fill="none" stroke="#b8b8b8" stroke-width="0.6"/></svg>
<svg class="a" style="left:2.0px;top:580.0px" width="12" height="12" viewBox="0 0 12 12"><path d="M1 6 H4 M5.5 6 H8 M9.5 6 H11" stroke="#a2a2a2" stroke-width="0.8"/></svg>
<svg class="a" style="left:2.0px;top:595.0px" width="12" height="12" viewBox="0 0 12 12"><path d="M1 6 H4 M5.5 6 H8 M9.5 6 H11" stroke="#a2a2a2" stroke-width="0.8"/></svg>
<svg class="a" style="left:2.0px;top:608.5px" width="12" height="12" viewBox="0 0 12 12"><path d="M2 2.5 L9 9 M2 9 L7 4" stroke="#a2a2a2" stroke-width="0.8"/></svg>
<svg class="a" style="left:2.0px;top:623.0px" width="12" height="12" viewBox="0 0 12 12"><path d="M2 4 H5 V2 H8 V4 H10.5 V10 H2z" fill="none" stroke="#a2a2a2" stroke-width="0.9"/></svg>
<svg class="a" style="left:2.0px;top:643.0px" width="12" height="12" viewBox="0 0 12 12"><path d="M2 2 q6 0 7.5 7 M2 5.5 q4 0 5 4.5 M1.5 8.5 L8 3.5" fill="none" stroke="#a2a2a2" stroke-width="0.8"/></svg>
<svg class="a" style="left:2.0px;top:663.0px" width="12" height="12" viewBox="0 0 12 12"><path d="M8.5 1 V11" stroke="#666" stroke-width="1.2"/><path d="M2 6 H7 M5.5 4.5 L7 6 L5.5 7.5" fill="none" stroke="#a2a2a2" stroke-width="0.8"/><rect x="1.5" y="2" width="3" height="2" fill="none" stroke="#b8b8b8" stroke-width="0.6"/><rect x="9.5" y="3" width="1.8" height="6" fill="none" stroke="#a2a2a2" stroke-width="0.6"/></svg>
<svg class="a" style="left:2.0px;top:683.0px" width="12" height="12" viewBox="0 0 12 12"><path d="M1.5 2 q5 4 0 9" fill="none" stroke="#a2a2a2" stroke-width="0.8"/><rect x="6" y="3" width="4" height="3" fill="none" stroke="#b8b8b8" stroke-width="0.6"/><path d="M5 8 H11 M8 6.5 V10.5" stroke="#b8b8b8" stroke-width="0.6"/></svg>
<div class="a" style="left:12.5px;top:501px;width:0;height:0;border-left:3px solid transparent;border-bottom:3px solid #555;"></div>
<div class="a" style="left:12.5px;top:574px;width:0;height:0;border-left:3px solid transparent;border-bottom:3px solid #555;"></div>
<div class="a" style="left:12.5px;top:589px;width:0;height:0;border-left:3px solid transparent;border-bottom:3px solid #555;"></div>
<div class="a" style="left:12.5px;top:603px;width:0;height:0;border-left:3px solid transparent;border-bottom:3px solid #555;"></div>
<div class="a" style="left:12.5px;top:617px;width:0;height:0;border-left:3px solid transparent;border-bottom:3px solid #555;"></div>
<div class="a" style="left:2px;top:639.5px;width:13px;height:1px;background:#d4d4d4"></div>
<div class="a" style="left:2px;top:659.5px;width:13px;height:1px;background:#d4d4d4"></div>
<div class="a" style="left:2px;top:678.5px;width:13px;height:1px;background:#d4d4d4"></div>
<div class="a" style="left:5px;top:698px;width:0;height:0;border-top:2px solid transparent;border-bottom:2px solid transparent;border-right:2.5px solid #000;"></div>
<div class="hl" style="left:20.5px;top:54px;width:13.5px;height:11.5px;background:#cfe6f8;border-color:#7ab8e6"></div>
<svg class="a" style="left:21.5px;top:54.1px" width="11" height="11" viewBox="0 0 11 11"><path d="M1.5 3 H5 L6 4 H10 V9.5 H1.5z" fill="#e8c040" stroke="#6a5210" stroke-width="0.7"/><path d="M1 9.8 L3 5.5 H11.5 L9.5 9.8z" fill="#2a78e0" stroke="#123a8a" stroke-width="0.7"/><path d="M3.5 7.5 H9" stroke="#9cd0ff" stroke-width="0.9"/></svg>
<svg class="a" style="left:21.5px;top:65.7px" width="11" height="11" viewBox="0 0 11 11"><path d="M3 1.5 L7 3.5 L4 6.5 Q8 7 6.5 10.5" fill="none" stroke="#111" stroke-width="1.2"/></svg>
<svg class="a" style="left:21.5px;top:77.1px" width="11" height="11" viewBox="0 0 11 11"><path d="M1 6.5 L5.5 2 L11 5.5 L6.5 10.5z" fill="#2a7ce8" stroke="#103a90" stroke-width="0.7"/><path d="M4 5 q2 3 4 0" fill="none" stroke="#9cd0ff" stroke-width="0.9"/></svg>
<svg class="a" style="left:21.5px;top:88.5px" width="11" height="11" viewBox="0 0 11 11"><circle cx="3.5" cy="3.5" r="1.5" fill="#3a6ad8"/><circle cx="8.5" cy="3.5" r="1.5" fill="#3a6ad8"/><circle cx="3.5" cy="8.5" r="1.5" fill="#3a6ad8"/><circle cx="8.5" cy="8.5" r="1.5" fill="#3a6ad8"/></svg>
<svg class="a" style="left:21.5px;top:99.8px" width="11" height="11" viewBox="0 0 11 11"><path d="M1.5 3 L6 5 L10.5 2 L9 6.5 L11 10 L6.5 8 L3 10.5 L4 6.5z" fill="#2a7ce8" stroke="#103a90" stroke-width="0.7"/></svg>
<svg class="a" style="left:21.5px;top:111.1px" width="11" height="11" viewBox="0 0 11 11"><path d="M2.5 9.5 L8 3 q2-1.5 3 0.5 q0.5 1.5-1 3 L5.5 10.5 q-2 1-3-1z" fill="#8a8a8a" stroke="#444" stroke-width="0.8"/><path d="M4.5 8.5 L8.5 4.5" stroke="#ddd" stroke-width="0.9"/></svg>
<svg class="a" style="left:21.5px;top:122.5px" width="11" height="11" viewBox="0 0 11 11"><path d="M6 1 L1.5 11 M6 1 L10.5 11 M3 7.5 H9" fill="none" stroke="#111" stroke-width="1.3"/></svg>
<svg class="a" style="left:21.5px;top:133.9px" width="11" height="11" viewBox="0 0 11 11"><path d="M1 1.5 H11 L7 6.5 V9 L5 10 V6.5z" fill="#2a8cf0" stroke="#103a90" stroke-width="0.6"/><path d="M6 8.5 v3" stroke="#e07020" stroke-width="1.4"/></svg>
<svg class="a" style="left:21.5px;top:145.3px" width="11" height="11" viewBox="0 0 11 11"><path d="M2 1.5 H7.5 L10 4 V10.8 H2z" fill="#4a4a42" stroke="#222" stroke-width="0.7"/><path d="M3.5 6 H8 M3.5 8 H8" stroke="#d8d0a8" stroke-width="0.9"/></svg>
<svg class="a" style="left:21.5px;top:156.7px" width="11" height="11" viewBox="0 0 11 11"><rect x="1.5" y="1.5" width="9.5" height="9" fill="#3a78e0" stroke="#123a8a" stroke-width="1"/><rect x="3.2" y="3.2" width="6" height="4.5" fill="#b8d8ff"/></svg>
<svg class="a" style="left:21.5px;top:168.1px" width="11" height="11" viewBox="0 0 11 11"><path d="M2 2 L9 8.5 M9.5 2 L3 8.5" stroke="#111" stroke-width="1"/><rect x="1" y="8.5" width="10" height="2.6" fill="#3a78e0" stroke="#123a8a" stroke-width="0.6"/><circle cx="3" cy="2.5" r="1.2" fill="none" stroke="#111" stroke-width="0.8"/></svg>
<svg class="a" style="left:21.5px;top:179.5px" width="11" height="11" viewBox="0 0 11 11"><path d="M6 6 L6 1.5 A4.8 4.8 0 1 0 10.8 7z" fill="#2a7ce8" stroke="#103a90" stroke-width="0.8"/><path d="M7 5 L7 1 A4.5 4.5 0 0 1 11.3 5z" fill="#7cc0ff" stroke="#103a90" stroke-width="0.6"/></svg>
<svg class="a" style="left:21.0px;top:197.5px" width="12" height="12" viewBox="0 0 12 12"><path d="M1.5 5 L4.5 2 H10.5 V7.5 L7.5 10.5 H1.5z" fill="#bcbcbc" stroke="#8a8a8a" stroke-width="0.8"/><path d="M4 8 L8.5 3.5" stroke="#eee" stroke-width="1"/></svg>
<svg class="a" style="left:21.0px;top:212.0px" width="12" height="12" viewBox="0 0 12 12"><path d="M1 8 L5 5 L11 7 L7 10.5z" fill="#e8d890" stroke="#6a5a20" stroke-width="0.7"/><path d="M3 6.5 L3 2.5 L8.5 1.5 L8.5 6" fill="#3a86ea" stroke="#103a90" stroke-width="0.7"/><path d="M6 7 L10.5 3" stroke="#103a90" stroke-width="0.9"/></svg>
<svg class="a" style="left:21.0px;top:231.5px" width="12" height="12" viewBox="0 0 12 12"><path d="M2 4 H9 V10.8 H2z" fill="#3a86ea" stroke="#0a2a78" stroke-width="0.9"/><path d="M2 4 L4 2 H11 L9 4 M11 2 V8.8 L9 10.8" fill="#7cc0ff" stroke="#0a2a78" stroke-width="0.8"/><path d="M1 1 H11" stroke="#0a2a78" stroke-width="1"/></svg>
<svg class="a" style="left:21.0px;top:246.5px" width="12" height="12" viewBox="0 0 12 12"><path d="M1.5 5 L5 3 L10 4.5 V9 L6.5 11 L1.5 9.5z" fill="#3a86ea" stroke="#0a2a78" stroke-width="0.8"/><path d="M1.5 5 L6.5 6.5 L10 4.5 M6.5 6.5 V11" fill="none" stroke="#0a2a78" stroke-width="0.7"/><path d="M7 1 q3.5 0.5 3.5 3" fill="none" stroke="#111" stroke-width="0.9"/></svg>
<svg class="a" style="left:21.0px;top:266.5px" width="12" height="12" viewBox="0 0 12 12"><rect x="1.5" y="5" width="4.5" height="5.5" fill="#fff" stroke="#222" stroke-width="0.9"/><path d="M5 2 L8 1 L11 2.5 V6 L8 7.5 L5 6z" fill="#3a86ea" stroke="#0a2a78" stroke-width="0.7"/><rect x="6.5" y="7.5" width="4" height="3.5" fill="#e8e8e8" stroke="#333" stroke-width="0.7"/></svg>
<svg class="a" style="left:21.0px;top:296.5px" width="12" height="12" viewBox="0 0 12 12"><path d="M1.5 4.5 L5 2 L10.5 3 V8.5 L7 11 L1.5 10z" fill="#3a86ea" stroke="#0a2a78" stroke-width="0.9"/><path d="M3 5.5 L8 6.2 V9.4 L3 8.8z" fill="#9cd0ff" stroke="#0a2a78" stroke-width="0.6"/></svg>
<svg class="a" style="left:21.0px;top:311.5px" width="12" height="12" viewBox="0 0 12 12"><path d="M1 5.5 L6 3 L11 4.5 V9 L6 11.2 L1 9.8z" fill="#2a76e2" stroke="#0a2a78" stroke-width="0.9"/><path d="M1 5.5 L6 7 L11 4.5 M6 7 V11.2" fill="none" stroke="#0a2a78" stroke-width="0.7"/><path d="M3 7.5 L5 8 V9.8 L3 9.3z" fill="#9cd0ff"/></svg>
<svg class="a" style="left:21.0px;top:326.5px" width="12" height="12" viewBox="0 0 12 12"><path d="M1 6 L3 3 L9 2 L11 5 V9.5 L5 11 L1 9.5z" fill="#2a76e2" stroke="#0a2a78" stroke-width="0.9"/><path d="M5 6.5 V11 M5 6.5 L11 5 M5 6.5 L1 6" fill="none" stroke="#0a2a78" stroke-width="0.7"/></svg>
<svg class="a" style="left:21.0px;top:346.5px" width="12" height="12" viewBox="0 0 12 12"><rect x="1.2" y="1.5" width="10" height="9.5" fill="#2a76e2" stroke="#0a2a78" stroke-width="1"/><rect x="3.5" y="3.8" width="5.4" height="5" fill="#dff0ff" stroke="#0a2a78" stroke-width="0.7"/></svg>
<svg class="a" style="left:21.0px;top:361.5px" width="12" height="12" viewBox="0 0 12 12"><path d="M1.5 4 L5 2 L9 3 Q11 5 10.5 8.5 L7 11 L1.5 9.5z" fill="#3a86ea" stroke="#0a2a78" stroke-width="0.9"/><path d="M1.5 4 L6.5 5.5 Q8 7 7 11" fill="none" stroke="#0a2a78" stroke-width="0.7"/></svg>
<svg class="a" style="left:21.0px;top:376.5px" width="12" height="12" viewBox="0 0 12 12"><rect x="2" y="2" width="8.5" height="8.5" rx="1.5" fill="#d4d4d4" stroke="#b8b8b8" stroke-width="0.8"/><path d="M4.5 5 q1.5-2 3 0 q0 1.5-1.5 2.2" fill="none" stroke="#f8f8f8" stroke-width="1"/></svg>
<svg class="a" style="left:21.0px;top:390.5px" width="12" height="12" viewBox="0 0 12 12"><path d="M2 10 L4 3 L10 2 L8 9z" fill="#c8c8c8" stroke="#b8b8b8" stroke-width="0.8"/></svg>
<svg class="a" style="left:21.0px;top:405.5px" width="12" height="12" viewBox="0 0 12 12"><path d="M1.5 10.5 L4 3 L8.5 2 L11 10.5z" fill="#3a86ea" stroke="#0a2a78" stroke-width="0.9"/><path d="M4 3 L6.5 4 L8.5 2 M6.5 4 L6 10.5" fill="none" stroke="#0a2a78" stroke-width="0.7"/></svg>
<svg class="a" style="left:21.0px;top:420.0px" width="12" height="12" viewBox="0 0 12 12"><path d="M1.5 3.5 L4 1.5 H10.5 V8.5 L8 10.8 H1.5z" fill="#2a76e2" stroke="#0a2a78" stroke-width="0.9"/><path d="M1.5 3.5 H8 V10.8 M8 3.5 L10.5 1.5" fill="none" stroke="#0a2a78" stroke-width="0.7"/><path d="M3.5 6 h3 v2.5 h-3z" fill="#9cd0ff"/></svg>
<svg class="a" style="left:21.0px;top:435.0px" width="12" height="12" viewBox="0 0 12 12"><path d="M1 8 L1.5 4 L6 1.5 L11 6 L7 11 L1.5 10z" fill="#3a86ea" stroke="#0a2a78" stroke-width="0.9"/><path d="M3.5 5 L6 4 L8 6 L5.5 8.5 H3.5z" fill="#dff0ff" stroke="#0a2a78" stroke-width="0.6"/></svg>
<svg class="a" style="left:21.0px;top:450.0px" width="12" height="12" viewBox="0 0 12 12"><path d="M1.5 6 L4 4 H8 V9 L5.5 11 H1.5z" fill="#5a8ae0" stroke="#0a2a78" stroke-width="0.9"/><circle cx="8.5" cy="3.5" r="2.3" fill="#8a8a8a" stroke="#333" stroke-width="0.7"/></svg>
<svg class="a" style="left:21.0px;top:465.0px" width="12" height="12" viewBox="0 0 12 12"><path d="M4.5 1.5 H11 V8 H4.5z" fill="#3a86ea" stroke="#0a2a78" stroke-width="0.9"/><path d="M1.5 6 H6.5 V11 H1.5z" fill="#5a9af0" stroke="#0a2a78" stroke-width="0.9"/></svg>
<svg class="a" style="left:21.0px;top:480.0px" width="12" height="12" viewBox="0 0 12 12"><path d="M4 3 L7 1.5 L11 3 V6 L8 7.5 L4 6z" fill="#7ab0f4" stroke="#0a2a78" stroke-width="0.7"/><path d="M1.5 7 L4.5 5.5 L8 7 V10 L5 11.3 L1.5 10z" fill="#3a86ea" stroke="#0a2a78" stroke-width="0.8"/><path d="M1 2 l3 2" stroke="#111" stroke-width="1.2"/></svg>
<svg class="a" style="left:21.0px;top:494.5px" width="12" height="12" viewBox="0 0 12 12"><path d="M2 8 L5 6 H10.5 V9 L7.5 11 H2z M2 5.5 L5 3.5 H10.5 M2 5.5 V8 M4 3 L6.5 1.5 H10.5 V6" fill="#d0d0d0" stroke="#8e8e8e" stroke-width="0.7"/></svg>
<svg class="a" style="left:21.0px;top:514.0px" width="12" height="12" viewBox="0 0 12 12"><rect x="1.5" y="5" width="4.5" height="5.5" fill="#fff" stroke="#222" stroke-width="0.9"/><path d="M5 2 L8 1 L11 2.5 V6 L8 7.5 L5 6z" fill="#3a86ea" stroke="#0a2a78" stroke-width="0.7"/><rect x="6.5" y="7.5" width="4" height="3.5" fill="#e8e8e8" stroke="#333" stroke-width="0.7"/></svg>
<div class="a" style="left:20px;top:229px;width:14px;height:1px;background:#d8d8d8"></div>
<div class="a" style="left:20px;top:262px;width:14px;height:1px;background:#d8d8d8"></div>
<div class="a" style="left:20px;top:290.5px;width:14px;height:1px;background:#d8d8d8"></div>
<div class="a" style="left:20px;top:509.5px;width:14px;height:1px;background:#d8d8d8"></div>
<div class="a" style="left:31px;top:222px;width:0;height:0;border-left:3px solid transparent;border-bottom:3px solid #444;"></div>
<div class="a" style="left:31px;top:257px;width:0;height:0;border-left:3px solid transparent;border-bottom:3px solid #444;"></div>
<div class="a" style="left:31px;top:307px;width:0;height:0;border-left:3px solid transparent;border-bottom:3px solid #444;"></div>
<div class="a" style="left:31px;top:371px;width:0;height:0;border-left:3px solid transparent;border-bottom:3px solid #444;"></div>
<div class="a" style="left:31px;top:445px;width:0;height:0;border-left:3px solid transparent;border-bottom:3px solid #444;"></div>
<div class="a" style="left:31px;top:505px;width:0;height:0;border-left:3px solid transparent;border-bottom:3px solid #444;"></div>
<div class="a" style="left:23px;top:282.5px;width:0;height:0;border-top:2px solid transparent;border-bottom:2px solid transparent;border-right:2.5px solid #000;"></div>
<div class="a" style="left:23px;top:530px;width:0;height:0;border-top:2px solid transparent;border-bottom:2px solid transparent;border-right:2.5px solid #000;"></div>
<div class="a" style="left:19.5px;top:56px;width:1px;height:135px;background:repeating-linear-gradient(to bottom,#d8c8b8 0 1px,transparent 1px 2px);"></div>
<div class="a" style="left:35.5px;top:48.5px;width:132px;height:12px;border:1px solid #b8b8b8;box-sizing:border-box;background:#f0f0f0"></div>
<div class="t" style="left:37.5px;top:51.1px;font-size:8.25px;color:#222;">Дерево модели</div>
<svg class="a" style="left:146px;top:50px" width="9" height="9" viewBox="0 0 9 9"><rect x="3.2" y="2" width="2.8" height="3" fill="#666" stroke="#111" stroke-width="0.8"/><path d="M2.2 5.2 H7 M4.6 5.2 V7.8" stroke="#111" stroke-width="0.9"/></svg>
<svg class="a" style="left:157px;top:50.5px" width="8" height="8" viewBox="0 0 8 8"><path d="M1.3 1.5 L6.5 6.7 M6.5 1.5 L1.3 6.7" stroke="#111" stroke-width="1.4"/></svg>
<div class="hl" style="left:37px;top:62.5px;width:14px;height:15px;background:#d6e9f8;border-color:#7ab4e0"></div>
<svg class="a" style="left:38.5px;top:64px" width="11" height="12" viewBox="0 0 11 12"><path d="M2.5 1 V10.5 H5.5 M2.5 4.5 H5" fill="none" stroke="#111" stroke-width="1.1"/><rect x="1" y="0.5" width="2.6" height="2" fill="#111"/><path d="M5 3 L9.5 5.5 L7.5 6 L8.5 8.5 L7.5 9 L6.5 6.6 L5 8z" fill="#222"/></svg>
<svg class="a" style="left:53.5px;top:64px" width="11" height="12" viewBox="0 0 11 12"><path d="M1 2.5 H4 M1 6 H4 M1 9.5 H4" stroke="#111" stroke-width="1.3"/><path d="M5.5 2.5 H10 M5.5 6 H10 M5.5 9.5 H10" stroke="#333" stroke-width="1" stroke-dasharray="1.6 0.8"/><path d="M2.5 2.5 V9.5" stroke="#111" stroke-width="0.8"/></svg>
<div class="a" style="left:68px;top:69px;width:0;height:0;border-left:2px solid transparent;border-right:2px solid transparent;border-top:2.5px solid #000;"></div>
<div class="sep" style="left:76.5px;top:63.5px;height:13px;"></div>
<svg class="a" style="left:81px;top:63.5px" width="9" height="13" viewBox="0 0 9 13"><rect x="1" y="1" width="7" height="11" fill="#f8f8ff" stroke="#1a1a6a" stroke-width="1"/><rect x="2.5" y="2.5" width="4" height="3" fill="#8a8ac8"/><path d="M2.5 8 H6.5 M2.5 10 H6.5" stroke="#1a1a6a" stroke-width="0.8"/></svg>
<svg class="a" style="left:95px;top:63.5px" width="11" height="13" viewBox="0 0 11 13"><rect x="1" y="1.5" width="9" height="10" fill="#e8e8e8" stroke="#b8b8b8" stroke-width="0.8"/><path d="M3 4 H8 M3 6.5 H8 M3 9 H8 M5.5 2.5 V11" stroke="#b8b8b8" stroke-width="0.8"/></svg>
<div class="a" style="left:36.5px;top:78.5px;width:131px;height:648px;border:1px solid #a8a8a8;box-sizing:border-box;background:#fff;"></div>
<div class="a" style="left:38.5px;top:80.5px;width:127px;height:644px;border:1px solid #dcdcdc;box-sizing:border-box;background:#fff;overflow:hidden" id="treebox">
<div class="a" style="left:8.0px;top:13.700000000000003px;width:1px;height:233.40000000000003px;background:repeating-linear-gradient(to bottom,#b0b0b0 0 1px,transparent 1px 2px);"></div>
<div class="a" style="left:23.0px;top:53.60000000000002px;width:1px;height:180.2px;background:repeating-linear-gradient(to bottom,#b0b0b0 0 1px,transparent 1px 2px);"></div>
<svg class="a" style="left:2.0px;top:1.7px" width="12" height="12" viewBox="0 0 12 12"><rect x="1" y="3.5" width="9" height="7.5" fill="#d8b868" stroke="#2a1a08" stroke-width="1"/><rect x="2.5" y="1.5" width="4" height="2.5" fill="#d8b868" stroke="#2a1a08" stroke-width="0.9"/><rect x="3.5" y="5.5" width="4" height="3.5" fill="#f8f0d8" stroke="#2a1a08" stroke-width="0.8"/><path d="M9 11 h3" stroke="#2a1a08" stroke-width="1.2"/></svg>
<div class="tr" style="left:18.3px;top:2.7px;letter-spacing:-0.188px;">Ходовая часть  -01 (Тел-0, Сб</div>
<div class="a" style="left:11.5px;top:20.5px;width:6px;height:1px;background:repeating-linear-gradient(to right,#b0b0b0 0 1px,transparent 1px 2px);"></div>
<svg class="a" style="left:4.5px;top:17.7px" width="7" height="7" viewBox="0 0 7 7"><rect x="0.5" y="0.5" width="6" height="6" fill="#fcfcfc" stroke="#a8a8a8" stroke-width="0.7"/><path d="M2 3.5 H5" stroke="#505050" stroke-width="0.8"/><path d="M3.5 2 V5" stroke="#505050" stroke-width="0.8"/></svg>
<svg class="a" style="left:17.5px;top:15.0px" width="12" height="12" viewBox="0 0 12 12"><path d="M3 2.5 L10.5 1.5 L10 8 L2.5 9z" fill="#7ab4f0" stroke="#12307a" stroke-width="0.9"/><path d="M4.5 4 L9 3.5 L8.8 6.8 L4.2 7.4z" fill="#b8dcff"/><path d="M1 11 L3 8.5" stroke="#c04040" stroke-width="0.9"/></svg>
<div class="tr" style="left:33.3px;top:16.0px;letter-spacing:-0.051px;">Системы координат</div>
<div class="a" style="left:11.5px;top:34.5px;width:6px;height:1px;background:repeating-linear-gradient(to right,#b0b0b0 0 1px,transparent 1px 2px);"></div>
<svg class="a" style="left:4.5px;top:31.0px" width="7" height="7" viewBox="0 0 7 7"><rect x="0.5" y="0.5" width="6" height="6" fill="#fcfcfc" stroke="#a8a8a8" stroke-width="0.7"/><path d="M2 3.5 H5" stroke="#505050" stroke-width="0.8"/><path d="M3.5 2 V5" stroke="#505050" stroke-width="0.8"/></svg>
<svg class="a" style="left:17.5px;top:28.3px" width="12" height="12" viewBox="0 0 12 12"><path d="M1 3.5 H4.5 L5.5 4.5 H11 V10.5 H1z" fill="#f0dc78" stroke="#7a6410" stroke-width="0.8"/><rect x="2.5" y="6" width="2.4" height="2.4" fill="#222"/><path d="M6 6 L9.5 6.5 L8 9.5z" fill="#3a6ad8"/></svg>
<div class="tr" style="left:33.3px;top:29.3px;letter-spacing:0.082px;">Макро</div>
<div class="a" style="left:11.5px;top:47.5px;width:6px;height:1px;background:repeating-linear-gradient(to right,#b0b0b0 0 1px,transparent 1px 2px);"></div>
<svg class="a" style="left:4.5px;top:44.3px" width="7" height="7" viewBox="0 0 7 7"><rect x="0.5" y="0.5" width="6" height="6" fill="#fcfcfc" stroke="#a8a8a8" stroke-width="0.7"/><path d="M2 3.5 H5" stroke="#505050" stroke-width="0.8"/></svg>
<svg class="a" style="left:17.5px;top:41.6px" width="12" height="12" viewBox="0 0 12 12"><path d="M2.5 1 V9.5 H8 M2.5 5 H6" fill="none" stroke="#12307a" stroke-width="1.2"/><rect x="5.5" y="3.5" width="3" height="3" fill="#2a60d0"/><rect x="7.5" y="8" width="3" height="3" fill="#2a60d0"/><rect x="1" y="0.5" width="3" height="2.5" fill="#12307a"/></svg>
<div class="tr" style="left:33.3px;top:42.6px;letter-spacing:0.016px;">Компоненты</div>
<div class="a" style="left:26.5px;top:60.5px;width:6px;height:1px;background:repeating-linear-gradient(to right,#b0b0b0 0 1px,transparent 1px 2px);"></div>
<svg class="a" style="left:19.7px;top:57.6px" width="7" height="7" viewBox="0 0 7 7"><rect x="0.5" y="0.5" width="6" height="6" fill="#fcfcfc" stroke="#a8a8a8" stroke-width="0.7"/><path d="M2 3.5 H5" stroke="#505050" stroke-width="0.8"/><path d="M3.5 2 V5" stroke="#505050" stroke-width="0.8"/></svg>
<svg class="a" style="left:32.5px;top:54.9px" width="12" height="12" viewBox="0 0 12 12"><path d="M1 11 V4 L3 1.5 L5.5 3 V5 L9 4.5 L11.5 8 L9.5 11z" fill="#2468d8" stroke="#0a2470" stroke-width="0.9" stroke-linejoin="round"/><path d="M3.5 6.5 H7.5 V9 H3.5z" fill="#9cd0ff" stroke="#0a2470" stroke-width="0.6"/></svg>
<div class="tr" style="left:48.3px;top:55.9px;letter-spacing:-0.146px;">(ф) Кронштейн 01</div>
<div class="a" style="left:26.5px;top:74.5px;width:6px;height:1px;background:repeating-linear-gradient(to right,#b0b0b0 0 1px,transparent 1px 2px);"></div>
<svg class="a" style="left:19.7px;top:70.9px" width="7" height="7" viewBox="0 0 7 7"><rect x="0.5" y="0.5" width="6" height="6" fill="#fcfcfc" stroke="#a8a8a8" stroke-width="0.7"/><path d="M2 3.5 H5" stroke="#505050" stroke-width="0.8"/><path d="M3.5 2 V5" stroke="#505050" stroke-width="0.8"/></svg>
<svg class="a" style="left:32.5px;top:68.2px" width="12" height="12" viewBox="0 0 12 12"><path d="M1 11 V4 L3 1.5 L5.5 3 V5 L9 4.5 L11.5 8 L9.5 11z" fill="#2468d8" stroke="#0a2470" stroke-width="0.9" stroke-linejoin="round"/><path d="M3.5 6.5 H7.5 V9 H3.5z" fill="#9cd0ff" stroke="#0a2470" stroke-width="0.6"/></svg>
<div class="tr" style="left:48.3px;top:69.2px;letter-spacing:-0.028px;">(+) Колесо</div>
<div class="a" style="left:26.5px;top:87.5px;width:6px;height:1px;background:repeating-linear-gradient(to right,#b0b0b0 0 1px,transparent 1px 2px);"></div>
<svg class="a" style="left:19.7px;top:84.2px" width="7" height="7" viewBox="0 0 7 7"><rect x="0.5" y="0.5" width="6" height="6" fill="#fcfcfc" stroke="#a8a8a8" stroke-width="0.7"/><path d="M2 3.5 H5" stroke="#505050" stroke-width="0.8"/><path d="M3.5 2 V5" stroke="#505050" stroke-width="0.8"/></svg>
<svg class="a" style="left:32.5px;top:81.5px" width="12" height="12" viewBox="0 0 12 12"><path d="M1 4 L4.5 1 H9 L11.5 4.5 V9 L9 11.3 H1z" fill="#2a7ae8" stroke="#0a2470" stroke-width="0.9" stroke-linejoin="round"/><path d="M4 5 L6.5 3.5 L9 6 V9 H4z" fill="#b8dcff" stroke="#0a2470" stroke-width="0.6"/><circle cx="6.3" cy="7" r="1" fill="#2468d8"/></svg>
<div class="tr" style="left:48.3px;top:82.5px;letter-spacing:0.019px;">(+) Чистик</div>
<div class="a" style="left:26.5px;top:100.5px;width:6px;height:1px;background:repeating-linear-gradient(to right,#b0b0b0 0 1px,transparent 1px 2px);"></div>
<svg class="a" style="left:19.7px;top:97.5px" width="7" height="7" viewBox="0 0 7 7"><rect x="0.5" y="0.5" width="6" height="6" fill="#fcfcfc" stroke="#a8a8a8" stroke-width="0.7"/><path d="M2 3.5 H5" stroke="#505050" stroke-width="0.8"/><path d="M3.5 2 V5" stroke="#505050" stroke-width="0.8"/></svg>
<svg class="a" style="left:32.5px;top:94.8px" width="12" height="12" viewBox="0 0 12 12"><path d="M1 4 L4.5 1 H9 L11.5 4.5 V9 L9 11.3 H1z" fill="#2a7ae8" stroke="#0a2470" stroke-width="0.9" stroke-linejoin="round"/><path d="M4 5 L6.5 3.5 L9 6 V9 H4z" fill="#b8dcff" stroke="#0a2470" stroke-width="0.6"/><circle cx="6.3" cy="7" r="1" fill="#2468d8"/></svg>
<div class="tr" style="left:48.3px;top:95.8px;letter-spacing:-0.125px;">(+) Обтекатель</div>
<div class="a" style="left:26.5px;top:114.5px;width:6px;height:1px;background:repeating-linear-gradient(to right,#b0b0b0 0 1px,transparent 1px 2px);"></div>
<svg class="a" style="left:19.7px;top:110.8px" width="7" height="7" viewBox="0 0 7 7"><rect x="0.5" y="0.5" width="6" height="6" fill="#fcfcfc" stroke="#a8a8a8" stroke-width="0.7"/><path d="M2 3.5 H5" stroke="#505050" stroke-width="0.8"/><path d="M3.5 2 V5" stroke="#505050" stroke-width="0.8"/></svg>
<svg class="a" style="left:32.5px;top:108.1px" width="12" height="12" viewBox="0 0 12 12"><path d="M1 4 L4.5 1 H9 L11.5 4.5 V9 L9 11.3 H1z" fill="#2a7ae8" stroke="#0a2470" stroke-width="0.9" stroke-linejoin="round"/><path d="M4 5 L6.5 3.5 L9 6 V9 H4z" fill="#b8dcff" stroke="#0a2470" stroke-width="0.6"/><circle cx="6.3" cy="7" r="1" fill="#2468d8"/></svg>
<div class="tr" style="left:48.3px;top:109.1px;letter-spacing:-0.139px;">(+) Гидромотор  ARD</div>
<div class="a" style="left:26.5px;top:127.5px;width:6px;height:1px;background:repeating-linear-gradient(to right,#b0b0b0 0 1px,transparent 1px 2px);"></div>
<svg class="a" style="left:19.7px;top:124.1px" width="7" height="7" viewBox="0 0 7 7"><rect x="0.5" y="0.5" width="6" height="6" fill="#fcfcfc" stroke="#a8a8a8" stroke-width="0.7"/><path d="M2 3.5 H5" stroke="#505050" stroke-width="0.8"/><path d="M3.5 2 V5" stroke="#505050" stroke-width="0.8"/></svg>
<svg class="a" style="left:32.5px;top:121.4px" width="12" height="12" viewBox="0 0 12 12"><path d="M1 9 L4.5 5 L5 1.5 L8.5 1 L11.5 4.5 L10.5 8 L6 8.5 L4 11z" fill="#2a86f0" stroke="#0a2a78" stroke-width="0.9" stroke-linejoin="round"/><path d="M5.5 3 L8 2.5 L10 5 L9.5 7 L6.5 7z" fill="#9cdcff"/><path d="M1.5 9.5 L4.5 6" stroke="#0a2a78" stroke-width="1.6"/></svg>
<div class="tr" style="left:48.3px;top:122.4px;letter-spacing:-0.263px;">Болт М14х1,5-6gх90 (</div>
<div class="a" style="left:26.5px;top:140.5px;width:6px;height:1px;background:repeating-linear-gradient(to right,#b0b0b0 0 1px,transparent 1px 2px);"></div>
<svg class="a" style="left:19.7px;top:137.4px" width="7" height="7" viewBox="0 0 7 7"><rect x="0.5" y="0.5" width="6" height="6" fill="#fcfcfc" stroke="#a8a8a8" stroke-width="0.7"/><path d="M2 3.5 H5" stroke="#505050" stroke-width="0.8"/><path d="M3.5 2 V5" stroke="#505050" stroke-width="0.8"/></svg>
<svg class="a" style="left:32.5px;top:134.7px" width="12" height="12" viewBox="0 0 12 12"><path d="M1 9 L4.5 5 L5 1.5 L8.5 1 L11.5 4.5 L10.5 8 L6 8.5 L4 11z" fill="#2a86f0" stroke="#0a2a78" stroke-width="0.9" stroke-linejoin="round"/><path d="M5.5 3 L8 2.5 L10 5 L9.5 7 L6.5 7z" fill="#9cdcff"/><path d="M1.5 9.5 L4.5 6" stroke="#0a2a78" stroke-width="1.6"/></svg>
<div class="tr" style="left:48.3px;top:135.7px;letter-spacing:-0.272px;">Шайба 14Л ГОСТ 640</div>
<div class="a" style="left:26.5px;top:154.5px;width:6px;height:1px;background:repeating-linear-gradient(to right,#b0b0b0 0 1px,transparent 1px 2px);"></div>
<svg class="a" style="left:19.7px;top:150.7px" width="7" height="7" viewBox="0 0 7 7"><rect x="0.5" y="0.5" width="6" height="6" fill="#fcfcfc" stroke="#a8a8a8" stroke-width="0.7"/><path d="M2 3.5 H5" stroke="#505050" stroke-width="0.8"/><path d="M3.5 2 V5" stroke="#505050" stroke-width="0.8"/></svg>
<svg class="a" style="left:32.5px;top:148.0px" width="12" height="12" viewBox="0 0 12 12"><path d="M1 9 L4.5 5 L5 1.5 L8.5 1 L11.5 4.5 L10.5 8 L6 8.5 L4 11z" fill="#2a86f0" stroke="#0a2a78" stroke-width="0.9" stroke-linejoin="round"/><path d="M5.5 3 L8 2.5 L10 5 L9.5 7 L6.5 7z" fill="#9cdcff"/><path d="M1.5 9.5 L4.5 6" stroke="#0a2a78" stroke-width="1.6"/></svg>
<div class="tr" style="left:48.3px;top:149.0px;letter-spacing:-0.268px;">Гайка М14х1,5-6Н (S2</div>
<div class="a" style="left:26.5px;top:167.5px;width:6px;height:1px;background:repeating-linear-gradient(to right,#b0b0b0 0 1px,transparent 1px 2px);"></div>
<svg class="a" style="left:19.7px;top:164.0px" width="7" height="7" viewBox="0 0 7 7"><rect x="0.5" y="0.5" width="6" height="6" fill="#fcfcfc" stroke="#a8a8a8" stroke-width="0.7"/><path d="M2 3.5 H5" stroke="#505050" stroke-width="0.8"/><path d="M3.5 2 V5" stroke="#505050" stroke-width="0.8"/></svg>
<svg class="a" style="left:32.5px;top:161.3px" width="12" height="12" viewBox="0 0 12 12"><path d="M1 9 L4.5 5 L5 1.5 L8.5 1 L11.5 4.5 L10.5 8 L6 8.5 L4 11z" fill="#2a86f0" stroke="#0a2a78" stroke-width="0.9" stroke-linejoin="round"/><path d="M5.5 3 L8 2.5 L10 5 L9.5 7 L6.5 7z" fill="#9cdcff"/><path d="M1.5 9.5 L4.5 6" stroke="#0a2a78" stroke-width="1.6"/></svg>
<div class="tr" style="left:48.3px;top:162.3px;letter-spacing:-0.263px;">Болт М12х1,5-6gх25 (</div>
<div class="a" style="left:26.5px;top:180.5px;width:6px;height:1px;background:repeating-linear-gradient(to right,#b0b0b0 0 1px,transparent 1px 2px);"></div>
<svg class="a" style="left:19.7px;top:177.3px" width="7" height="7" viewBox="0 0 7 7"><rect x="0.5" y="0.5" width="6" height="6" fill="#fcfcfc" stroke="#a8a8a8" stroke-width="0.7"/><path d="M2 3.5 H5" stroke="#505050" stroke-width="0.8"/><path d="M3.5 2 V5" stroke="#505050" stroke-width="0.8"/></svg>
<svg class="a" style="left:32.5px;top:174.6px" width="12" height="12" viewBox="0 0 12 12"><path d="M1 9 L4.5 5 L5 1.5 L8.5 1 L11.5 4.5 L10.5 8 L6 8.5 L4 11z" fill="#2a86f0" stroke="#0a2a78" stroke-width="0.9" stroke-linejoin="round"/><path d="M5.5 3 L8 2.5 L10 5 L9.5 7 L6.5 7z" fill="#9cdcff"/><path d="M1.5 9.5 L4.5 6" stroke="#0a2a78" stroke-width="1.6"/></svg>
<div class="tr" style="left:48.3px;top:175.6px;letter-spacing:-0.272px;">Шайба 12Л ГОСТ 640</div>
<div class="a" style="left:26.5px;top:193.5px;width:6px;height:1px;background:repeating-linear-gradient(to right,#b0b0b0 0 1px,transparent 1px 2px);"></div>
<svg class="a" style="left:19.7px;top:190.6px" width="7" height="7" viewBox="0 0 7 7"><rect x="0.5" y="0.5" width="6" height="6" fill="#fcfcfc" stroke="#a8a8a8" stroke-width="0.7"/><path d="M2 3.5 H5" stroke="#505050" stroke-width="0.8"/><path d="M3.5 2 V5" stroke="#505050" stroke-width="0.8"/></svg>
<svg class="a" style="left:32.5px;top:187.9px" width="12" height="12" viewBox="0 0 12 12"><path d="M1 9 L4.5 5 L5 1.5 L8.5 1 L11.5 4.5 L10.5 8 L6 8.5 L4 11z" fill="#2a86f0" stroke="#0a2a78" stroke-width="0.9" stroke-linejoin="round"/><path d="M5.5 3 L8 2.5 L10 5 L9.5 7 L6.5 7z" fill="#9cdcff"/><path d="M1.5 9.5 L4.5 6" stroke="#0a2a78" stroke-width="1.6"/></svg>
<div class="tr" style="left:48.3px;top:188.9px;letter-spacing:-0.316px;">Шайба С 12.37 ГОСТ</div>
<div class="a" style="left:26.5px;top:207.5px;width:6px;height:1px;background:repeating-linear-gradient(to right,#b0b0b0 0 1px,transparent 1px 2px);"></div>
<svg class="a" style="left:19.7px;top:203.9px" width="7" height="7" viewBox="0 0 7 7"><rect x="0.5" y="0.5" width="6" height="6" fill="#fcfcfc" stroke="#a8a8a8" stroke-width="0.7"/><path d="M2 3.5 H5" stroke="#505050" stroke-width="0.8"/><path d="M3.5 2 V5" stroke="#505050" stroke-width="0.8"/></svg>
<svg class="a" style="left:32.5px;top:201.2px" width="12" height="12" viewBox="0 0 12 12"><path d="M1 9 L4.5 5 L5 1.5 L8.5 1 L11.5 4.5 L10.5 8 L6 8.5 L4 11z" fill="#2a86f0" stroke="#0a2a78" stroke-width="0.9" stroke-linejoin="round"/><path d="M5.5 3 L8 2.5 L10 5 L9.5 7 L6.5 7z" fill="#9cdcff"/><path d="M1.5 9.5 L4.5 6" stroke="#0a2a78" stroke-width="1.6"/></svg>
<div class="tr" style="left:48.3px;top:202.2px;letter-spacing:-0.287px;">Болт М20х1,5-6gх65 Г</div>
<div class="a" style="left:26.5px;top:220.5px;width:6px;height:1px;background:repeating-linear-gradient(to right,#b0b0b0 0 1px,transparent 1px 2px);"></div>
<svg class="a" style="left:19.7px;top:217.2px" width="7" height="7" viewBox="0 0 7 7"><rect x="0.5" y="0.5" width="6" height="6" fill="#fcfcfc" stroke="#a8a8a8" stroke-width="0.7"/><path d="M2 3.5 H5" stroke="#505050" stroke-width="0.8"/><path d="M3.5 2 V5" stroke="#505050" stroke-width="0.8"/></svg>
<svg class="a" style="left:32.5px;top:214.5px" width="12" height="12" viewBox="0 0 12 12"><path d="M1 9 L4.5 5 L5 1.5 L8.5 1 L11.5 4.5 L10.5 8 L6 8.5 L4 11z" fill="#2a86f0" stroke="#0a2a78" stroke-width="0.9" stroke-linejoin="round"/><path d="M5.5 3 L8 2.5 L10 5 L9.5 7 L6.5 7z" fill="#9cdcff"/><path d="M1.5 9.5 L4.5 6" stroke="#0a2a78" stroke-width="1.6"/></svg>
<div class="tr" style="left:48.3px;top:215.5px;letter-spacing:-0.272px;">Шайба 20Л ГОСТ 640</div>
<div class="a" style="left:26.5px;top:233.5px;width:6px;height:1px;background:repeating-linear-gradient(to right,#b0b0b0 0 1px,transparent 1px 2px);"></div>
<svg class="a" style="left:19.7px;top:230.5px" width="7" height="7" viewBox="0 0 7 7"><rect x="0.5" y="0.5" width="6" height="6" fill="#fcfcfc" stroke="#a8a8a8" stroke-width="0.7"/><path d="M2 3.5 H5" stroke="#505050" stroke-width="0.8"/><path d="M3.5 2 V5" stroke="#505050" stroke-width="0.8"/></svg>
<svg class="a" style="left:32.5px;top:227.8px" width="12" height="12" viewBox="0 0 12 12"><path d="M1 9 L4.5 5 L5 1.5 L8.5 1 L11.5 4.5 L10.5 8 L6 8.5 L4 11z" fill="#2a86f0" stroke="#0a2a78" stroke-width="0.9" stroke-linejoin="round"/><path d="M5.5 3 L8 2.5 L10 5 L9.5 7 L6.5 7z" fill="#9cdcff"/><path d="M1.5 9.5 L4.5 6" stroke="#0a2a78" stroke-width="1.6"/></svg>
<div class="tr" style="left:48.3px;top:228.8px;letter-spacing:-0.183px;">Гайка М20х1,5-6Н ГО</div>
<div class="a" style="left:11.5px;top:247.5px;width:6px;height:1px;background:repeating-linear-gradient(to right,#b0b0b0 0 1px,transparent 1px 2px);"></div>
<svg class="a" style="left:4.5px;top:243.8px" width="7" height="7" viewBox="0 0 7 7"><rect x="0.5" y="0.5" width="6" height="6" fill="#fcfcfc" stroke="#a8a8a8" stroke-width="0.7"/><path d="M2 3.5 H5" stroke="#505050" stroke-width="0.8"/><path d="M3.5 2 V5" stroke="#505050" stroke-width="0.8"/></svg>
<svg class="a" style="left:17.5px;top:241.1px" width="12" height="12" viewBox="0 0 12 12"><g transform="rotate(-40 6 6)"><rect x="0.5" y="3" width="11" height="6" rx="3" fill="none" stroke="#1a2a9a" stroke-width="1.1"/><rect x="2.8" y="4.6" width="7.5" height="2.8" rx="1.4" fill="none" stroke="#1a2a9a" stroke-width="0.9"/></g></svg>
<div class="tr" style="left:33.3px;top:242.1px;letter-spacing:-0.001px;">Сопряжения</div>
<div class="a" style="left:0px;top:633px;width:125px;height:10px;background:#f0f0f0;"></div>
<div class="a" style="left:11px;top:633.5px;width:49px;height:9px;border:1px solid #a0a0a0;border-radius:1.5px;box-sizing:border-box;background:linear-gradient(#f4f4f4,#dcdcdc 45%,#c8c8c8 55%,#d8d8d8);"></div>
<div class="a" style="left:33px;top:636px;width:5px;height:4px;background:repeating-linear-gradient(to right,#555 0 1px,transparent 1px 2px);"></div>
<div class="a" style="left:3.5px;top:636px;width:0;height:0;border-top:2px solid transparent;border-bottom:2px solid transparent;border-right:2.5px solid #333;"></div>
<div class="a" style="left:117.5px;top:636px;width:0;height:0;border-top:2px solid transparent;border-bottom:2px solid transparent;border-left:2.5px solid #333;"></div>
</div>
<div class="a" style="left:36px;top:727px;width:131.5px;height:14px;background:#f0f0f0;"></div>
<div class="a" style="left:90px;top:727px;width:77.5px;height:1px;background:#444;"></div>
<div class="a" style="left:36.5px;top:727px;width:54px;height:14.2px;border:1px solid #444;border-top:none;border-left:1px solid #fff;box-sizing:border-box;background:#f0f0f0;"></div>
<div class="t" style="left:40px;top:730px;font-size:8.3px;color:#222;">Построение</div>
<div class="a" style="left:1265.5px;top:51px;width:9px;height:1px;background:repeating-linear-gradient(to right,#b4b4b4 0 1px,transparent 1px 2px);"></div>
<svg class="a" style="left:1264.0px;top:56.5px" width="12" height="12" viewBox="0 0 12 12"><rect x="1.5" y="2" width="9" height="8" fill="none" stroke="#8e8e8e" stroke-width="0.8"/><path d="M1.5 5 H10.5 M1.5 7.5 H10.5 M6 5 V10" stroke="#8e8e8e" stroke-width="0.6"/><rect x="4" y="2.8" width="4" height="1.6" fill="#8e8e8e"/></svg>
<svg class="a" style="left:1264.0px;top:71.5px" width="12" height="12" viewBox="0 0 12 12"><rect x="1.5" y="3.5" width="9" height="7" fill="none" stroke="#8e8e8e" stroke-width="0.8"/><path d="M1.5 6 H10.5 M6.5 6 V8.5 H10.5" stroke="#8e8e8e" stroke-width="0.6"/><path d="M3 2 H8 V3.5" fill="none" stroke="#8e8e8e" stroke-width="0.8"/></svg>
<svg class="a" style="left:1264.0px;top:86.0px" width="12" height="12" viewBox="0 0 12 12"><path d="M4 2 q-3 4 0 8 M8 2 q3 4 0 8 M4 2 V10 M8 2 V10" fill="none" stroke="#8e8e8e" stroke-width="0.8"/></svg>
<svg class="a" style="left:1264.0px;top:100.5px" width="12" height="12" viewBox="0 0 12 12"><rect x="1.5" y="3" width="9.5" height="6.5" fill="none" stroke="#8e8e8e" stroke-width="0.8"/><path d="M1.5 5.5 H7 V9.5 M7 7 H11" stroke="#8e8e8e" stroke-width="0.6"/></svg>
<svg class="a" style="left:1264.0px;top:115.0px" width="12" height="12" viewBox="0 0 12 12"><path d="M3 10 V4 q1.5-2 3 0 V10 M6 4 q2-2 3.5 0 V10" fill="none" stroke="#8e8e8e" stroke-width="0.8"/></svg>
<svg class="a" style="left:1264.0px;top:129.5px" width="12" height="12" viewBox="0 0 12 12"><path d="M2 2 V10.5 H9 q2-3 0-5 V2z M4 2 V7 H9" fill="none" stroke="#8e8e8e" stroke-width="0.8"/></svg>
<div class="a" style="left:1267px;top:144.5px;width:0;height:0;border-top:2px solid transparent;border-bottom:2px solid transparent;border-right:2.5px solid #000;"></div>
<div class="a" style="left:1265.5px;top:156px;width:9px;height:1px;background:repeating-linear-gradient(to right,#b4b4b4 0 1px,transparent 1px 2px);"></div>
<svg class="a" style="left:1264.0px;top:161.5px" width="12" height="12" viewBox="0 0 12 12"><path d="M1 9 H11 M2 9 V6 M10 9 V6" stroke="#8e8e8e" stroke-width="0.8"/><path d="M3 7 L8 2 H10 L6 7z" fill="#c8c8c8" stroke="#8e8e8e" stroke-width="0.5"/><path d="M1 10.5 l1.5-1.5 M4 10.5 l1.5-1.5 M7 10.5 l1.5-1.5" stroke="#8e8e8e" stroke-width="0.5"/></svg>
<svg class="a" style="left:1264.0px;top:175.5px" width="12" height="12" viewBox="0 0 12 12"><path d="M1.5 2.5 V10.5 M10.5 2.5 V10.5 M1.5 4.5 H10.5" stroke="#8e8e8e" stroke-width="0.9"/><path d="M1.5 4.5 l2-1 v2z M10.5 4.5 l-2-1 v2z" fill="#8e8e8e"/></svg>
<svg class="a" style="left:1264.0px;top:190.0px" width="12" height="12" viewBox="0 0 12 12"><circle cx="6" cy="6" r="4.2" fill="none" stroke="#8e8e8e" stroke-width="0.8"/><path d="M3 9 L9 3" stroke="#8e8e8e" stroke-width="0.8"/><path d="M9 3 l-2.2 0.6 1.6 1.6z M3 9 l2.2-0.6 -1.6-1.6z" fill="#8e8e8e"/></svg>
<svg class="a" style="left:1264.0px;top:205.0px" width="12" height="12" viewBox="0 0 12 12"><path d="M2 10 L8 3" stroke="#8e8e8e" stroke-width="0.8"/><path d="M8 3 l-2.2 0.8 1.5 1.5z" fill="#8e8e8e"/><path d="M6 1.5 q4 1.5 4.5 6" fill="none" stroke="#8e8e8e" stroke-width="0.7"/></svg>
<svg class="a" style="left:1264.0px;top:219.5px" width="12" height="12" viewBox="0 0 12 12"><path d="M1.5 10.5 L4.5 2 L10.5 9.5z" fill="none" stroke="#8e8e8e" stroke-width="0.8"/><path d="M8 10 q-1-2.5-3.5-3" fill="none" stroke="#8e8e8e" stroke-width="0.7"/></svg>
<svg class="a" style="left:1264.0px;top:234.0px" width="12" height="12" viewBox="0 0 12 12"><path d="M1.5 3 V9 H10.5 V3 q-4.5 3-9 0z" fill="none" stroke="#8e8e8e" stroke-width="0.8"/></svg>
<svg class="a" style="left:1264.0px;top:248.0px" width="12" height="12" viewBox="0 0 12 12"><path d="M1.5 8.5 H10.5 M5 8.5 V4 H9 M3.5 6.5 H7" stroke="#8e8e8e" stroke-width="0.8" fill="none"/><path d="M1.5 10.5 H10.5" stroke="#b8b8b8" stroke-width="0.8" stroke-dasharray="1 0.8"/></svg>
<div class="a" style="left:1275px;top:185px;width:0;height:0;border-left:3px solid transparent;border-bottom:3px solid #444;"></div>
<div class="a" style="left:1275px;top:214px;width:0;height:0;border-left:3px solid transparent;border-bottom:3px solid #444;"></div>
<div class="a" style="left:1275px;top:229px;width:0;height:0;border-left:3px solid transparent;border-bottom:3px solid #444;"></div>
<div class="a" style="left:1267px;top:264px;width:0;height:0;border-top:2px solid transparent;border-bottom:2px solid transparent;border-right:2.5px solid #000;"></div>
<div class="a" style="left:1265.5px;top:275px;width:9px;height:1px;background:repeating-linear-gradient(to right,#b4b4b4 0 1px,transparent 1px 2px);"></div>
<svg class="a" style="left:1264.0px;top:280.5px" width="12" height="12" viewBox="0 0 12 12"><path d="M2 2 H10 V4 H7.5 V8 H10 V10.5 H2 V8 H4.5 V4 H2z" fill="#aaa" stroke="#8e8e8e" stroke-width="0.7"/></svg>
<svg class="a" style="left:1264.0px;top:295.0px" width="12" height="12" viewBox="0 0 12 12"><rect x="1.5" y="3" width="9.5" height="6.5" fill="#bbb" stroke="#8e8e8e" stroke-width="0.8"/><path d="M1.5 5 H11 M4.5 3 V9.5 M7.7 3 V9.5" stroke="#eee" stroke-width="0.7"/></svg>
<svg class="a" style="left:1264.0px;top:309.5px" width="12" height="12" viewBox="0 0 12 12"><path d="M2 10.5 H10 M3 5 L6 9.5 L10.5 1.5" fill="none" stroke="#8e8e8e" stroke-width="0.8"/><path d="M3 5 H8" stroke="#8e8e8e" stroke-width="0.7"/></svg>
<svg class="a" style="left:1264.0px;top:324.0px" width="12" height="12" viewBox="0 0 12 12"><rect x="3" y="1.5" width="6" height="5" fill="none" stroke="#8e8e8e" stroke-width="0.8"/><path d="M6 6.5 V10.5 M2.5 10.5 H9.5 M4.5 4 H7.5" stroke="#8e8e8e" stroke-width="0.8"/></svg>
<svg class="a" style="left:1264.0px;top:338.5px" width="12" height="12" viewBox="0 0 12 12"><path d="M1.5 10 L4.5 2 H8 L10.5 9" fill="none" stroke="#8e8e8e" stroke-width="0.8"/><path d="M1.5 10 l0.2-2 1.4 0.8z M10.5 9 l-1.6-1 1.6-0.6z" fill="#8e8e8e"/></svg>
<svg class="a" style="left:1264.0px;top:353.0px" width="12" height="12" viewBox="0 0 12 12"><path d="M2 10.5 L5.5 2.5 H10.5 M4.5 5 H9.5 M3.5 7.5 H8.5" fill="none" stroke="#8e8e8e" stroke-width="0.8"/><path d="M2 10.5 l0.2-2.2 1.5 1z" fill="#8e8e8e"/></svg>
<svg class="a" style="left:1264.0px;top:368.0px" width="12" height="12" viewBox="0 0 12 12"><path d="M2.5 1.5 V10.5 H10 M2.5 3 H10.5 V6 H2.5 M5.2 3 V6 M7.8 3 V6" fill="none" stroke="#8e8e8e" stroke-width="0.8"/></svg>
<svg class="a" style="left:1264.0px;top:382.5px" width="12" height="12" viewBox="0 0 12 12"><path d="M2 8 L4.5 2 L7 8 M3 6 H6 M9.5 1.5 V8" fill="none" stroke="#8e8e8e" stroke-width="0.9"/><path d="M9.5 9 l-1.3-2.4 h2.6z" fill="#8e8e8e"/><path d="M1.5 10.5 H11" stroke="#8e8e8e" stroke-width="1"/></svg>
<svg class="a" style="left:1264.0px;top:397.0px" width="12" height="12" viewBox="0 0 12 12"><path d="M2.5 6.5 L4.5 1.5 L6.5 6.5 M3.3 4.8 H5.7 M1.5 9 H9.5" fill="none" stroke="#8e8e8e" stroke-width="0.9"/><path d="M11 9 l-2.4-1.3 v2.6z" fill="#8e8e8e"/></svg>
<svg class="a" style="left:1264.0px;top:413.0px" width="12" height="12" viewBox="0 0 12 12"><circle cx="6" cy="7" r="3.3" fill="none" stroke="#8e8e8e" stroke-width="0.8"/><path d="M5 5.5 V8.5 M7 5.5 V8.5 M7 3 L10 1.5" stroke="#8e8e8e" stroke-width="0.7"/></svg>
<div class="a" style="left:1275px;top:348px;width:0;height:0;border-left:3px solid transparent;border-bottom:3px solid #444;"></div>
<div class="a" style="left:1275px;top:362.5px;width:0;height:0;border-left:3px solid transparent;border-bottom:3px solid #444;"></div>
<div class="a" style="left:1265px;top:432px;width:11px;height:1px;background:repeating-linear-gradient(to right,#9a9a9a 0 3px,transparent 3px 4.5px);"></div>
<svg class="a" style="left:1264.0px;top:440.0px" width="12" height="12" viewBox="0 0 12 12"><path d="M1.5 10 H10.5" stroke="#8e8e8e" stroke-width="0.8" stroke-dasharray="2 1"/><path d="M3 9 L7 2 H10 L6 9z" fill="#bbb" stroke="#8e8e8e" stroke-width="0.5"/></svg>
<svg class="a" style="left:1264.0px;top:455.0px" width="12" height="12" viewBox="0 0 12 12"><circle cx="6" cy="6" r="2.8" fill="none" stroke="#8e8e8e" stroke-width="0.7"/><path d="M6 1 V11 M1 6 H11" stroke="#8e8e8e" stroke-width="0.7" stroke-dasharray="2.5 0.8"/></svg>
<svg class="a" style="left:1264.0px;top:470.0px" width="12" height="12" viewBox="0 0 12 12"><path d="M4 1.5 q-2.5 3 0 4.5 t0 4.5" fill="none" stroke="#8e8e8e" stroke-width="0.8"/></svg>
<svg class="a" style="left:1264.0px;top:485.0px" width="12" height="12" viewBox="0 0 12 12"><path d="M1.5 3.5 H10 M8.5 3.5 V10.5" stroke="#8e8e8e" stroke-width="0.8" stroke-dasharray="3 1"/><path d="M8.5 2.5 v5" stroke="#666" stroke-width="0.9"/></svg>
<div class="a" style="left:1275px;top:480px;width:0;height:0;border-left:3px solid transparent;border-bottom:3px solid #444;"></div>
<div class="a" style="left:1267px;top:500.5px;width:0;height:0;border-top:2px solid transparent;border-bottom:2px solid transparent;border-right:2.5px solid #000;"></div>
<div class="a" style="left:171px;top:48px;width:1091px;height:1.6px;background:#8e8e8e;"></div>
<div class="a" style="left:170.8px;top:48px;width:1.4px;height:693px;background:#8a8a8a;"></div>
<div class="a" id="vp" style="left:172px;top:49px;width:1089px;height:692px;background:#fff;overflow:hidden;">
<svg class="a" style="left:-172px;top:-49px" width="1280" height="800" viewBox="0 0 1280 800">
<defs>
<linearGradient id="gT" gradientUnits="userSpaceOnUse" x1="470" y1="260" x2="970" y2="420">
<stop offset="0" stop-color="#6a6a6a"/><stop offset="0.35" stop-color="#6e6e6e"/><stop offset="0.7" stop-color="#505050"/><stop offset="1" stop-color="#404040"/></linearGradient>
<linearGradient id="gS0" gradientUnits="userSpaceOnUse" x1="560" y1="200" x2="720" y2="690">
<stop offset="0" stop-color="#6a6a6a"/><stop offset="0.5" stop-color="#5d5d5d"/><stop offset="1" stop-color="#525252"/></linearGradient>
<linearGradient id="gS1" gradientUnits="userSpaceOnUse" x1="570" y1="260" x2="700" y2="640">
<stop offset="0" stop-color="#6c6c6c"/><stop offset="0.5" stop-color="#606060"/><stop offset="1" stop-color="#5b5b5b"/></linearGradient>
<linearGradient id="gS2" gradientUnits="userSpaceOnUse" x1="500" y1="560" x2="780" y2="600">
<stop offset="0" stop-color="#3c3c3c"/><stop offset="0.25" stop-color="#5a5a5a"/><stop offset="0.5" stop-color="#b4b4b4"/><stop offset="0.75" stop-color="#707070"/><stop offset="1" stop-color="#565656"/></linearGradient>
<linearGradient id="gHL" gradientUnits="userSpaceOnUse" x1="540" y1="430" x2="760" y2="190">
<stop offset="0" stop-color="#8e8e8e" stop-opacity="0"/><stop offset="0.62" stop-color="#8e8e8e" stop-opacity="0"/><stop offset="0.82" stop-color="#929292" stop-opacity="0.95"/><stop offset="1" stop-color="#8a8a8a" stop-opacity="0.6"/></linearGradient>
<linearGradient id="gS2b" gradientUnits="userSpaceOnUse" x1="490" y1="420" x2="790" y2="520">
<stop offset="0" stop-color="#434343"/><stop offset="0.2" stop-color="#4a4a4a"/><stop offset="0.6" stop-color="#525252"/><stop offset="1" stop-color="#5e5e5e"/></linearGradient>
<radialGradient id="gS2h" gradientUnits="userSpaceOnUse" cx="636" cy="588" r="95" gradientTransform="translate(636 588) rotate(12) scale(1 0.45) rotate(-12) translate(-636 -588)">
<stop offset="0" stop-color="#c6c6c6" stop-opacity="1"/><stop offset="0.18" stop-color="#b8b8b8" stop-opacity="0.95"/><stop offset="0.45" stop-color="#909090" stop-opacity="0.7"/><stop offset="0.75" stop-color="#707070" stop-opacity="0.35"/><stop offset="1" stop-color="#606060" stop-opacity="0"/></radialGradient>
</defs>
<polygon points="410.3,372.1 410.4,368.0 410.5,363.9 410.7,359.8 411.0,355.7 411.3,351.7 411.7,347.7 412.2,343.7 412.7,339.8 413.4,335.9 414.1,332.0 414.8,328.1 415.6,324.3 416.6,320.5 417.5,316.8 418.6,313.1 419.7,309.4 420.9,305.8 422.1,302.2 423.5,298.7 424.9,295.2 426.3,291.7 427.8,288.3 429.4,284.9 431.1,281.6 432.8,278.3 434.6,275.1 436.4,271.9 445.4,256.8 447.5,253.4 449.0,251.0 451.1,247.7 453.4,244.3 455.0,242.0 457.3,238.7 461.4,233.1 465.7,227.6 468.2,224.4 470.1,222.2 472.7,219.0 474.6,216.8 479.4,211.4 481.4,209.2 484.2,206.2 486.3,204.0 489.2,201.0 491.3,198.8 494.3,195.9 496.4,193.7 498.7,191.6 501.7,188.7 504.0,186.6 507.1,183.7 509.4,181.6 511.7,179.6 515.0,176.7 517.3,174.7 520.6,171.9 524.0,169.2 527.4,166.5 530.9,163.9 534.4,161.4 538.0,159.0 541.6,156.6 545.3,154.3 549.0,152.1 552.8,149.9 556.6,147.8 560.5,145.8 564.4,143.9 568.3,142.0 572.3,140.2 576.4,138.5 580.4,136.9 584.5,135.4 588.7,133.9 592.9,132.5 597.1,131.2 601.3,130.0 605.6,128.8 609.9,127.7 614.2,126.7 618.6,125.8 623.0,125.0 627.4,124.2 631.9,123.6 636.3,123.0 640.8,122.5 645.3,122.1 649.8,121.7 654.4,121.5 658.9,121.3 663.5,121.2 668.1,121.2 672.6,121.3 677.2,121.4 681.9,121.7 686.5,122.0 691.1,122.4 695.7,122.9 700.3,123.4 705.0,124.1 709.6,124.8 714.2,125.6 718.8,126.5 723.4,127.5 728.1,128.6 732.7,129.7 737.3,130.9 741.8,132.2 746.4,133.6 751.0,135.0 755.5,136.5 760.1,138.2 764.6,139.8 769.1,141.6 773.5,143.4 778.0,145.3 782.4,147.3 786.8,149.4 791.2,151.5 795.6,153.8 799.9,156.0 804.2,158.4 808.5,160.8 812.7,163.3 816.9,165.9 821.1,168.5 825.2,171.2 829.3,174.0 833.4,176.8 837.4,179.7 841.4,182.7 845.3,185.7 849.2,188.8 853.1,192.0 856.9,195.2 860.6,198.5 864.4,201.8 868.0,205.2 871.6,208.7 875.2,212.2 878.7,215.7 882.2,219.3 885.6,223.0 888.9,226.7 892.2,230.5 895.5,234.3 898.6,238.2 901.8,242.1 904.8,246.1 907.8,250.1 910.7,254.1 913.6,258.2 916.4,262.3 919.2,266.5 921.8,270.7 924.5,275.0 927.0,279.2 929.5,283.6 931.9,287.9 934.2,292.3 936.5,296.7 938.7,301.1 940.8,305.6 942.9,310.1 944.9,314.6 946.8,319.2 948.6,323.7 950.4,328.3 952.0,332.9 953.7,337.5 955.2,342.2 956.6,346.8 958.0,351.5 959.3,356.2 960.6,360.9 961.7,365.6 962.8,370.3 963.8,375.0 964.7,379.7 965.5,384.4 966.3,389.2 967.0,393.9 967.5,398.6 968.0,403.4 968.5,408.1 968.8,412.8 969.1,417.5 969.3,422.2 969.4,426.9 969.4,431.6 969.4,436.2 969.3,440.9 969.0,445.6 968.8,450.2 968.4,454.8 967.9,459.4 967.4,463.9 966.8,468.5 966.1,473.0 965.3,477.5 964.5,482.0 963.5,486.4 962.5,490.9 961.4,495.2 960.3,499.6 959.0,503.9 957.7,508.2 956.3,512.5 954.8,516.7 953.2,520.9 951.6,525.0 949.9,529.1 948.1,533.2 946.3,537.2 944.4,541.1 942.4,545.1 940.3,549.0 938.1,552.8 935.9,556.6 933.6,560.3 931.3,564.0 928.9,567.6 926.4,571.2 923.8,574.7 921.2,578.2 918.5,581.6 915.7,584.9 912.9,588.2 910.0,591.4 907.0,594.6 904.0,597.7 901.0,600.8 897.8,603.8 894.6,606.7 891.4,609.5 889.0,611.5 885.7,614.3 883.3,616.3 880.9,618.3 877.6,621.0 875.2,622.9 871.8,625.5 869.4,627.3 867.0,629.2 863.6,631.7 861.1,633.4 857.7,635.9 855.2,637.6 849.3,641.6 846.8,643.2 843.4,645.4 840.8,647.0 837.4,649.1 834.8,650.6 831.3,652.7 828.8,654.1 825.2,656.1 822.6,657.5 819.1,659.3 815.5,661.1 812.9,662.4 809.3,664.1 805.6,665.7 803.1,666.9 799.4,668.4 796.8,669.4 793.1,670.9 789.4,672.2 785.6,673.5 783.1,674.4 779.3,675.6 775.5,676.8 764.7,680.0 761.1,681.0 757.5,681.9 753.8,682.7 750.1,683.5 746.4,684.2 742.6,684.9 738.8,685.4 735.0,685.9 731.2,686.3 727.3,686.6 723.4,686.9 719.5,687.1 715.5,687.2 711.6,687.2 707.6,687.1 703.6,687.0 699.5,686.8 695.5,686.6 691.5,686.2 687.4,685.8 683.3,685.3 679.2,684.7 675.1,684.1 671.0,683.4 666.9,682.6 662.8,681.7 658.7,680.8 654.6,679.8 650.4,678.7 646.3,677.5 642.2,676.3 638.0,675.0 633.9,673.6 629.8,672.2 625.7,670.7 621.6,669.1 617.5,667.4 613.4,665.7 609.3,663.9 605.2,662.0 601.1,660.1 597.1,658.1 593.1,656.1 589.1,653.9 585.1,651.7 581.1,649.5 577.1,647.2 573.2,644.8 569.3,642.3 565.4,639.8 561.5,637.3 557.7,634.6 553.9,632.0 550.1,629.2 546.3,626.4 542.6,623.5 538.9,620.6 535.3,617.7 531.6,614.6 528.1,611.6 524.5,608.4 521.0,605.3 517.5,602.0 514.1,598.8 510.7,595.4 507.3,592.0 504.0,588.6 500.7,585.2 497.5,581.6 494.3,578.1 491.2,574.5 488.1,570.9 485.1,567.2 482.1,563.5 479.2,559.7 476.3,555.9 473.4,552.1 470.6,548.3 467.9,544.4 465.2,540.5 462.6,536.5 460.1,532.5 457.6,528.5 455.1,524.5 452.7,520.4 450.4,516.3 448.1,512.2 445.9,508.1 443.8,503.9 441.7,499.8 439.7,495.6 437.7,491.4 435.8,487.2 434.0,482.9 432.2,478.7 430.5,474.4 428.9,470.1 427.3,465.9 425.8,461.6 424.4,457.3 423.0,453.0 421.7,448.7 420.5,444.4 419.3,440.1 418.2,435.8 417.2,431.5 416.2,427.2 415.4,422.9 414.6,418.6 413.8,414.3 413.1,410.0 412.5,405.8 412.0,401.5 411.6,397.2 411.2,393.0 410.9,388.8 410.6,384.6 410.4,380.4 410.4,376.2" fill="url(#gT)" stroke="#2a2a2a" stroke-width="1.0" stroke-linejoin="round" />
<path d="M824.37 646.71 A272 204.5 49.3 1 0 469.63 234.29 A272 204.5 49.3 1 0 824.37 646.71 Z" fill="url(#gS0)" stroke="#262626" stroke-width="1.0" />
<path d="M822.94 645.04 A269.8 202.84595588235294 49.3 1 0 471.06 235.96 A269.8 202.84595588235294 49.3 1 0 822.94 645.04 Z" fill="none" stroke="url(#gHL)" stroke-width="2.6" />
<path d="M821.50 643.38 A267.6 201.19191176470588 49.3 1 0 472.50 237.62 A267.6 201.19191176470588 49.3 1 0 821.50 643.38 Z" fill="none" stroke="#2e2e2e" stroke-width="0.9" />
<path d="M775.48 606.18 A209.3 157.9 49.3 1 0 502.52 288.82 A209.3 157.9 49.3 1 0 775.48 606.18 Z" fill="url(#gS1)" stroke="#202020" stroke-width="1.3" />
<path d="M749.17 576.43 A169.4 124.7 49.3 1 0 528.23 319.57 A169.4 124.7 49.3 1 0 749.17 576.43 Z" fill="url(#gS2b)" stroke="#1e1e1e" stroke-width="1.25" />
<path d="M748.84 576.05 A168.9 124.3319362455726 49.3 1 0 528.56 319.95 A168.9 124.3319362455726 49.3 1 0 748.84 576.05 Z" fill="url(#gS2h)" stroke="none" stroke-width="1" />
<polygon points="570.0,277.5 590.0,276.0 615.0,278.0 640.0,283.5 656.5,289.5 656.0,286.0 666.5,295.5 654.5,297.0 655.0,293.5 638.0,287.5 614.0,282.0 590.0,280.0 571.5,281.5" fill="none" stroke="#242424" stroke-width="0.9" stroke-linejoin="round" />
<defs>
<linearGradient id="gRim" gradientUnits="userSpaceOnUse" x1="520" y1="400" x2="780" y2="500">
<stop offset="0" stop-color="#e6e5d2"/><stop offset="0.5" stop-color="#efeedd"/><stop offset="1" stop-color="#f8f8f2"/></linearGradient>
<linearGradient id="gRimSh" gradientUnits="userSpaceOnUse" x1="530" y1="340" x2="700" y2="560"><stop offset="0" stop-color="#77776c" stop-opacity="0.28"/><stop offset="0.45" stop-color="#77776c" stop-opacity="0.1"/><stop offset="0.8" stop-color="#ffffff" stop-opacity="0"/><stop offset="1" stop-color="#ffffff" stop-opacity="0.25"/></linearGradient>
<clipPath id="cRim"><path d="M746.89 554.14 A149.5 110.8 49.3 1 0 551.91 327.46 A149.5 110.8 49.3 1 0 746.89 554.14 Z" fill="#000" stroke="none" stroke-width="1" /></clipPath>
</defs>
<g clip-path="url(#cRim)"><path d="M746.89 554.14 A149.5 110.8 49.3 1 0 551.91 327.46 A149.5 110.8 49.3 1 0 746.89 554.14 Z" fill="#f3f3ea" stroke="#444" stroke-width="0.7" />
<path d="M745.33 551.57 A146.5 108.6 49.3 1 0 554.27 329.43 A146.5 108.6 49.3 1 0 745.33 551.57 Z" fill="#e7e6d0" stroke="#666" stroke-width="0.7" />
<path d="M743.82 547.53 A142.5 105.6 49.3 1 0 557.98 331.47 A142.5 105.6 49.3 1 0 743.82 547.53 Z" fill="#f6f6ee" stroke="#555" stroke-width="0.7" />
<path d="M742.72 543.20 A138.5 102.7 49.3 1 0 562.08 333.20 A138.5 102.7 49.3 1 0 742.72 543.20 Z" fill="#e2e1cb" stroke="#555" stroke-width="0.7" />
<path d="M742.41 538.17 A134.5 99.7 49.3 1 0 566.99 334.23 A134.5 99.7 49.3 1 0 742.41 538.17 Z" fill="#d6d6cb" stroke="#555" stroke-width="0.7" />
<path d="M742.10 533.24 A130.5 96.7 49.3 1 0 571.90 335.36 A130.5 96.7 49.3 1 0 742.10 533.24 Z" fill="#e9e8d9" stroke="#555" stroke-width="0.7" />
<path d="M742.49 527.60 A126.5 93.8 49.3 1 0 577.51 335.80 A126.5 93.8 49.3 1 0 742.49 527.60 Z" fill="#dcdbc9" stroke="#555" stroke-width="0.7" />
<path d="M742.88 521.97 A122.5 90.8 49.3 1 0 583.12 336.23 A122.5 90.8 49.3 1 0 742.88 521.97 Z" fill="#ecebdf" stroke="#666" stroke-width="0.7" />
<path d="M742.72 515.58 A117.5 87.1 49.3 1 0 589.48 337.42 A117.5 87.1 49.3 1 0 742.72 515.58 Z" fill="#d6d5c3" stroke="#666" stroke-width="0.7" />
<path d="M742.46 509.09 A112.5 83.4 49.3 1 0 595.74 338.51 A112.5 83.4 49.3 1 0 742.46 509.09 Z" fill="#e2e1d0" stroke="#777" stroke-width="0.7" />
<path d="M746.89 554.14 A149.5 110.8 49.3 1 0 551.91 327.46 A149.5 110.8 49.3 1 0 746.89 554.14 Z" fill="url(#gRimSh)" stroke="none" stroke-width="1" /></g>
<path d="M746.89 554.14 A149.5 110.8 49.3 1 0 551.91 327.46 A149.5 110.8 49.3 1 0 746.89 554.14 Z" fill="none" stroke="#333" stroke-width="0.9" />
<defs>
<linearGradient id="gMot" gradientUnits="userSpaceOnUse" x1="610" y1="410" x2="700" y2="500">
<stop offset="0" stop-color="#a0a0a2"/><stop offset="0.5" stop-color="#8a8a8c"/><stop offset="1" stop-color="#808082"/></linearGradient>
</defs>
<path d="M610 412 Q640 398 672 408 Q705 422 716.5 448 L717.5 486 Q708 504 690 512 L640 520 L600 500 Z" fill="#98989a" stroke="#4a4a4a" stroke-width="0.8" stroke-linejoin="round" stroke-linecap="round" />
<path d="M712.20 464.08 A8 2.8 -68 1 0 706.20 478.92 A8 2.8 -68 1 0 712.20 464.08 Z" fill="#88888a" stroke="#3c3c3c" stroke-width="0.8" />
<path d="M711.67 466.12 A5.8 1.5 -68 1 0 707.33 476.88 A5.8 1.5 -68 1 0 711.67 466.12 Z" fill="#a2a2a4" stroke="#555" stroke-width="0.5" />
<path d="M697.17 498.21 A57 46 49.3 1 0 622.83 411.79 A57 46 49.3 1 0 697.17 498.21 Z" fill="#8a8a8c" stroke="#3a3a3a" stroke-width="0.8" />
<path d="M691.89 497.06 A53.5 43 49.3 1 0 622.11 415.94 A53.5 43 49.3 1 0 691.89 497.06 Z" fill="#747476" stroke="#3a3a3a" stroke-width="0.7" />
<path d="M688.26 496.16 A51 41 49.3 1 0 621.74 418.84 A51 41 49.3 1 0 688.26 496.16 Z" fill="#858587" stroke="#3a3a3a" stroke-width="0.7" />
<path d="M684.13 495.27 A48.5 39 49.3 1 0 620.87 421.73 A48.5 39 49.3 1 0 684.13 495.27 Z" fill="url(#gMot)" stroke="#333" stroke-width="0.8" />
<path d="M660 428 Q682 436 690 456 L683 466 L676 462 L672 492 L664 500 Q676 470 668 452 Z" fill="#7c7c7e" stroke="#333" stroke-width="0.7" stroke-linejoin="round" stroke-linecap="round" />
<path d="M676 462 L683 466 L679 494 L672 492 Z" fill="#9a9a9c" stroke="#333" stroke-width="0.6" stroke-linejoin="round" stroke-linecap="round" />
<path d="M663.82 487.53 A35 27.5 49.3 1 0 618.18 434.47 A35 27.5 49.3 1 0 663.82 487.53 Z" fill="#7a7a7c" stroke="#333" stroke-width="0.8" />
<path d="M660.37 485.76 A32 25 49.3 1 0 618.63 437.24 A32 25 49.3 1 0 660.37 485.76 Z" fill="#8c8c8e" stroke="#3c3c3c" stroke-width="0.7" />
<path d="M655.26 484.23 A28 21.5 49.3 1 0 618.74 441.77 A28 21.5 49.3 1 0 655.26 484.23 Z" fill="#6e6e70" stroke="#333" stroke-width="0.7" />
<path d="M650.30 482.95 A25 19.5 49.3 1 0 617.70 445.05 A25 19.5 49.3 1 0 650.30 482.95 Z" fill="#868688" stroke="#3a3a3a" stroke-width="0.7" />
<path d="M668.39 443.94 A5.2 4.2 49.3 1 0 661.61 436.06 A5.2 4.2 49.3 1 0 668.39 443.94 Z" fill="#5e5e60" stroke="#262626" stroke-width="0.8" />
<path d="M667.22 442.58 A3.4 2.8 49.3 1 0 662.78 437.42 A3.4 2.8 49.3 1 0 667.22 442.58 Z" fill="#8c8c8e" stroke="#2c2c2c" stroke-width="0.6" />
<path d="M666.04 441.21 A1.6 1.3 49.3 1 0 663.96 438.79 A1.6 1.3 49.3 1 0 666.04 441.21 Z" fill="#4a4a4c" stroke="none" stroke-width="0.5" />
<path d="M681.09 456.64 A5.2 4.2 49.3 1 0 674.31 448.76 A5.2 4.2 49.3 1 0 681.09 456.64 Z" fill="#5e5e60" stroke="#262626" stroke-width="0.8" />
<path d="M679.92 455.28 A3.4 2.8 49.3 1 0 675.48 450.12 A3.4 2.8 49.3 1 0 679.92 455.28 Z" fill="#8c8c8e" stroke="#2c2c2c" stroke-width="0.6" />
<path d="M678.74 453.91 A1.6 1.3 49.3 1 0 676.66 451.49 A1.6 1.3 49.3 1 0 678.74 453.91 Z" fill="#4a4a4c" stroke="none" stroke-width="0.5" />
<path d="M660.26 505.64 A5.460000000000001 4.41 49.3 1 0 653.14 497.36 A5.460000000000001 4.41 49.3 1 0 660.26 505.64 Z" fill="#5e5e60" stroke="#262626" stroke-width="0.8" />
<path d="M659.03 504.21 A3.57 2.94 49.3 1 0 654.37 498.79 A3.57 2.94 49.3 1 0 659.03 504.21 Z" fill="#8c8c8e" stroke="#2c2c2c" stroke-width="0.6" />
<path d="M657.80 502.77 A1.6800000000000002 1.3650000000000002 49.3 1 0 655.60 500.23 A1.6800000000000002 1.3650000000000002 49.3 1 0 657.80 502.77 Z" fill="#4a4a4c" stroke="none" stroke-width="0.5" />
<path d="M668 438 L678 433" fill="none" stroke="#555" stroke-width="2.4" stroke-linejoin="round" stroke-linecap="round" />
<path d="M648 498 Q652 492 660 494 L668 500" fill="none" stroke="#2e2e2e" stroke-width="0.9" stroke-linejoin="round" stroke-linecap="round" />
<path d="M568.8 423.8 L576.2 420.0 L588.8 423.8 L590.0 435.0 L587.5 437.5 L590.0 457.5 L593.1 470.0 L588.8 480.0 L580.0 470.0 L575.0 457.5 L570.0 437.5 Z" fill="#6c6c6e" stroke="#2a2a2a" stroke-width="0.7" stroke-linejoin="round" stroke-linecap="round" />
<path d="M577.03 427.20 A4.6 5.2 -10 1 0 567.97 428.80 A4.6 5.2 -10 1 0 577.03 427.20 Z" fill="#8a8a8c" stroke="#2e2e2e" stroke-width="0.8" />
<path d="M586.40 425.60 A2.6 2.6 0 1 0 581.20 425.60 A2.6 2.6 0 1 0 586.40 425.60 Z" fill="#707073" stroke="#222" stroke-width="0.8" />
<path d="M584.90 425.60 A1.1 1.1 0 1 0 582.70 425.60 A1.1 1.1 0 1 0 584.90 425.60 Z" fill="#a0a0a2" stroke="none" stroke-width="0.4" />
<path d="M582 434 q-3.5 7 0.5 13 M586 446 q-4 6 -1 12" fill="none" stroke="#2a2a2a" stroke-width="0.7" stroke-linejoin="round" stroke-linecap="round" />
<path d="M593.20 473.00 A2.6 2.6 0 1 0 588.00 473.00 A2.6 2.6 0 1 0 593.20 473.00 Z" fill="#4c4c4e" stroke="#1e1e1e" stroke-width="0.8" />
<path d="M590.0 482.5 L597.5 478.8 L606.2 482.5 L617.5 485.0 L627.5 492.5 L632.5 485.0 L642.5 480.0 L645.0 485.0 L635.0 495.0 L625.0 501.2 L615.0 497.5 L602.5 492.5 L592.5 488.8 Z" fill="#59595b" stroke="#222" stroke-width="0.8" stroke-linejoin="round" stroke-linecap="round" />
<path d="M627.20 497.00 A4.2 3.4 0 1 0 618.80 497.00 A4.2 3.4 0 1 0 627.20 497.00 Z" fill="#7a7a7c" stroke="#222" stroke-width="0.8" />
<path d="M607.20 489.00 A3.2 2.6 0 1 0 600.80 489.00 A3.2 2.6 0 1 0 607.20 489.00 Z" fill="#6a6a6c" stroke="#222" stroke-width="0.7" />
<path d="M598.60 484.00 A2.6 2.4 0 1 0 593.40 484.00 A2.6 2.4 0 1 0 598.60 484.00 Z" fill="#4e4e50" stroke="#1e1e1e" stroke-width="0.7" />
<path d="M587.5 435.6 L615.0 441.2 L645.0 446.2 L645.0 463.8 L640.0 470.0 L635.0 477.5 L623.8 483.8 L606.2 477.5 L593.8 467.5 L588.8 455.0 Z" fill="#666668" stroke="#262626" stroke-width="0.7" stroke-linejoin="round" stroke-linecap="round" />
<path d="M587.5 435.6 L591.9 438.8 L598.8 440.6 L599.4 460.0 L593.8 465.0 L588.8 455.0 Z" fill="#707072" stroke="#262626" stroke-width="0.8" stroke-linejoin="round" stroke-linecap="round" />
<path d="M598.8 440.6 L615.0 442.5 L615.0 452.5 L606.2 457.5 L602.5 460.0 L599.4 460.0 Z" fill="#5c5c5e" stroke="#262626" stroke-width="0.7" stroke-linejoin="round" stroke-linecap="round" />
<path d="M602.5 442.5 L611.2 443.8 L611.2 448.8 L602.5 447.5 Z" fill="#7a7a7c" stroke="#262626" stroke-width="0.6" stroke-linejoin="round" stroke-linecap="round" />
<path d="M605.5 447 l2.5 -1 l-0.5 4.5 z" fill="#1a1a1a" stroke="none" stroke-width="0.8" stroke-linejoin="round" stroke-linecap="round" />
<path d="M615.0 442.5 L623.8 446.2 L630.0 447.5 L638.8 446.9 L643.1 444.4 L645.0 446.2 L645.0 463.8 L640.0 467.5 L635.0 465.0 L635.0 455.0 L623.8 451.9 L615.0 452.5 Z" fill="#858587" stroke="#262626" stroke-width="0.8" stroke-linejoin="round" stroke-linecap="round" />
<path d="M638.8 448.1 L645.0 446.5 L645.0 462.8 L640.2 456.2 Z" fill="#b4b4b6" stroke="#333" stroke-width="0.6" stroke-linejoin="round" stroke-linecap="round" />
<path d="M602.5 460.0 L610.0 455.0 L623.8 452.5 L635.0 457.5 L637.5 465.0 L635.0 475.0 L623.8 482.5 L615.0 480.0 L606.2 475.0 Z" fill="#858587" stroke="#262626" stroke-width="0.8" stroke-linejoin="round" stroke-linecap="round" />
<path d="M610.0 455.0 L623.8 452.5 L635.0 457.5 L625.0 461.9 L615.0 459.0 Z" fill="#a0a0a2" stroke="#2a2a2a" stroke-width="0.7" stroke-linejoin="round" stroke-linecap="round" />
<path d="M618.5 462 l2 0 l0 2.8 l-2 0 z" fill="#1c1c1c" stroke="none" stroke-width="0.8" stroke-linejoin="round" stroke-linecap="round" />
<path d="M613.64 476.97 A7.6 7 15 1 0 598.96 473.03 A7.6 7 15 1 0 613.64 476.97 Z" fill="#858587" stroke="#222" stroke-width="0.9" />
<path d="M611.59 475.60 A6.2 5.6 15 1 0 599.61 472.40 A6.2 5.6 15 1 0 611.59 475.60 Z" fill="#9c9c9e" stroke="#4a4a4a" stroke-width="0.5" />
<path d="M624 470 L646 464 M626 478 L644 470 M632 488 L642 474 M620 482 L634 496" fill="none" stroke="#2a2a2a" stroke-width="1.0" stroke-linejoin="round" stroke-linecap="round" />
<path d="M635.60 470.00 A2.6 2.6 0 1 0 630.40 470.00 A2.6 2.6 0 1 0 635.60 470.00 Z" fill="#6e6e70" stroke="#222" stroke-width="0.7" />
<path d="M629.40 482.00 A2.4 2.4 0 1 0 624.60 482.00 A2.4 2.4 0 1 0 629.40 482.00 Z" fill="#6e6e70" stroke="#222" stroke-width="0.7" />
<path d="M586.9 431.9 Q588 427.8 597.5 426.9 Q606 427.5 608.1 433.1 L615 436.3 L623.8 438.1 Q628 436 634 436.3 Q643 437.5 643.8 441.5 Q643.5 446 638.8 447 Q632 448.5 623.8 446.3 L615 442.5 L606.3 441.3 L598.8 440.6 Q589 439.5 586.9 431.9 Z" fill="#a4a4a6" stroke="#262626" stroke-width="0.8" stroke-linejoin="round" stroke-linecap="round" />
<path d="M604.97 433.10 A6.9 3.8 5 1 0 591.23 431.90 A6.9 3.8 5 1 0 604.97 433.10 Z" fill="#838385" stroke="#262626" stroke-width="0.7" />
<path d="M594 431.5 L596.5 429.8 L601 430 L603 432.3 L600.5 434.6 L596 434.4 Z" fill="#98989a" stroke="#2a2a2a" stroke-width="0.6" stroke-linejoin="round" stroke-linecap="round" />
<path d="M636.84 442.18 A6.3 3.8 8 1 0 624.36 440.42 A6.3 3.8 8 1 0 636.84 442.18 Z" fill="#838385" stroke="#262626" stroke-width="0.7" />
<path d="M634.36 442.00 A3.6 2.1 8 1 0 627.24 441.00 A3.6 2.1 8 1 0 634.36 442.00 Z" fill="#b0b0b2" stroke="#3a3a3a" stroke-width="0.6" />
<path d="M681 497 L694 492" fill="none" stroke="#555" stroke-width="3" stroke-linejoin="round" stroke-linecap="round" />
<path d="M681 497 L694 492" fill="none" stroke="#c4c4c6" stroke-width="1.8" stroke-linejoin="round" stroke-linecap="round" />
<path d="M668 340 L676 333 L700 345 L712 360 L700 352 Z" fill="#a8a8aa" stroke="#555" stroke-width="0.6" stroke-linejoin="round" stroke-linecap="round" />
<path d="M646 321.5 Q662 325 676 333 L667 340 L649 336 Z" fill="#efc11f" stroke="#6a5a10" stroke-width="0.6" stroke-linejoin="round" stroke-linecap="round" />
<path d="M756.5 426 Q766 445 767.5 470 L765 482 L756.5 488 Z" fill="#efc11f" stroke="#6a5a10" stroke-width="0.6" stroke-linejoin="round" stroke-linecap="round" />
<polygon points="541.5,404.0 567.8,377.0 569.0,388.0 568.0,451.0 544.0,474.0 528.0,476.0 522.0,458.0 541.5,436.5" fill="#bebd83" stroke="#3a3a2a" stroke-width="0.7" stroke-linejoin="round" />
<polygon points="534.5,399.5 534.5,434.0 514.0,457.2 501.5,456.5" fill="#e6e5a6" stroke="#3a3a2a" stroke-width="0.7" stroke-linejoin="round" />
<polygon points="534.5,432.5 541.5,436.5 522.5,458.3 514.0,457.2" fill="#f1efb6" stroke="#3a3a2a" stroke-width="0.7" stroke-linejoin="round" />
<polygon points="534.5,399.5 541.5,404.5 541.5,436.5 534.5,432.5" fill="#f3f1ba" stroke="#3a3a2a" stroke-width="0.7" stroke-linejoin="round" />
<polygon points="534.5,399.5 558.0,375.5 565.0,380.0 541.5,404.5" fill="#dddc98" stroke="#3a3a2a" stroke-width="0.7" stroke-linejoin="round" />
<polygon points="558.0,375.5 563.0,371.0 570.0,375.0 565.0,380.0" fill="#f6f4c6" stroke="#3a3a2a" stroke-width="0.6" stroke-linejoin="round" />
<polygon points="647.9,349.3 693.4,354.5 653.1,391.3" fill="#b9b87e" stroke="#3a3a2a" stroke-width="0.7" stroke-linejoin="round" />
<polygon points="648.5,343.0 696.0,350.5 693.4,354.5 647.9,349.3" fill="#aeae78" stroke="#3a3a2a" stroke-width="0.7" stroke-linejoin="round" />
<polygon points="648.7,341.0 698.0,349.5 696.0,351.5 648.5,343.5" fill="#f1efb6" stroke="#3a3a2a" stroke-width="0.6" stroke-linejoin="round" />
<polygon points="645.0,348.0 648.0,349.3 653.3,391.5 647.0,394.0" fill="#f1efb6" stroke="#3a3a2a" stroke-width="0.6" stroke-linejoin="round" />
<polygon points="645.5,340.0 650.0,340.5 650.0,346.0 645.5,346.0" fill="#f8f6d0" stroke="#3a3a2a" stroke-width="0.5" stroke-linejoin="round" />
<polygon points="724.0,452.5 756.4,427.1 756.6,488.0 745.0,500.0 730.0,505.0" fill="#b4b37a" stroke="#3a3a2a" stroke-width="0.7" stroke-linejoin="round" />
<polygon points="650.0,397.0 653.1,394.0 666.3,407.0 722.3,447.3 718.5,452.0" fill="#d0ce90" stroke="#3a3a2a" stroke-width="0.7" stroke-linejoin="round" />
<polygon points="666.3,407.0 715.3,362.4 755.5,423.6 722.3,447.3" fill="#dad899" stroke="#3a3a2a" stroke-width="0.8" stroke-linejoin="round" />
<polygon points="653.1,393.9 699.5,352.8 715.3,362.4 666.3,407.0" fill="#f1efb6" stroke="#3a3a2a" stroke-width="0.8" stroke-linejoin="round" />
<polyline points="662.8,402.6 710.0,365.0" fill="none" stroke="#6a6a40" stroke-width="0.6" stroke-linejoin="round" stroke-linecap="round" />
<polygon points="699.5,352.8 704.0,349.5 719.0,359.5 715.3,362.4" fill="#f6f4c4" stroke="#3a3a2a" stroke-width="0.6" stroke-linejoin="round" />
<polygon points="645.0,394.0 653.1,393.9 654.0,402.0 646.0,403.0" fill="#f4f2c0" stroke="#3a3a2a" stroke-width="0.6" stroke-linejoin="round" />
<polygon points="722.3,447.3 755.5,423.6 756.6,427.5 724.2,452.8 718.5,452.0" fill="#f1efb6" stroke="#3a3a2a" stroke-width="0.7" stroke-linejoin="round" />
<polygon points="718.0,452.0 724.5,452.8 725.0,522.0 718.0,508.0" fill="#efedb2" stroke="#3a3a2a" stroke-width="0.7" stroke-linejoin="round" />
<polygon points="725.0,451.5 757.5,535.0 753.0,537.0 741.0,535.5 725.0,528.0" fill="#f0eeb4" stroke="#3a3a2a" stroke-width="0.8" stroke-linejoin="round" />
<polygon points="725.0,451.5 728.0,451.0 759.5,533.0 757.5,535.0" fill="#9c9b68" stroke="#3a3a2a" stroke-width="0.5" stroke-linejoin="round" />
<polygon points="697.0,513.0 720.5,490.0 725.0,492.0 725.0,528.0 741.0,535.5 741.0,538.0" fill="#b9b87e" stroke="#3a3a2a" stroke-width="0.7" stroke-linejoin="round" />
<polygon points="696.0,512.6 719.7,488.5 725.2,491.5 702.5,515.5" fill="#f1efb6" stroke="#3a3a2a" stroke-width="0.7" stroke-linejoin="round" />
<polygon points="741.0,535.0 753.0,537.0 760.5,541.0 760.0,546.0 741.5,563.0 740.5,562.0" fill="#ebe9ab" stroke="#3a3a2a" stroke-width="0.7" stroke-linejoin="round" />
<polygon points="741.0,536.0 744.5,538.0 744.5,560.0 741.0,563.0" fill="#d2d094" stroke="#3a3a2a" stroke-width="0.6" stroke-linejoin="round" />
<polygon points="693.8,512.6 741.0,535.0 740.5,562.5 697.0,546.5" fill="#efedb0" stroke="#3a3a2a" stroke-width="0.8" stroke-linejoin="round" />
<path d="M722.22 540.65 A6.3 5.6 20 1 0 710.38 536.35 A6.3 5.6 20 1 0 722.22 540.65 Z" fill="#c9c88e" stroke="#3a3a2a" stroke-width="0.8" />
<path d="M721.92 540.77 A4.6 4.3 20 1 0 713.28 537.63 A4.6 4.3 20 1 0 721.92 540.77 Z" fill="#f6f5d2" stroke="#77764a" stroke-width="0.5" />
<defs>
<linearGradient id="gPipe" gradientUnits="userSpaceOnUse" x1="570" y1="0" x2="648" y2="0">
<stop offset="0" stop-color="#d8735c"/><stop offset="0.25" stop-color="#c9674f"/><stop offset="0.6" stop-color="#bd5f4a"/><stop offset="1" stop-color="#b35a46"/></linearGradient>
<linearGradient id="gPipeIn" gradientUnits="userSpaceOnUse" x1="577" y1="0" x2="641" y2="0">
<stop offset="0" stop-color="#a85a48"/><stop offset="0.55" stop-color="#c8745c"/><stop offset="1" stop-color="#d98670"/></linearGradient>
<linearGradient id="gLug" x1="0" y1="0" x2="0.25" y2="1">
<stop offset="0" stop-color="#e98468"/><stop offset="0.35" stop-color="#ffb597"/><stop offset="0.7" stop-color="#ee8a6c"/><stop offset="1" stop-color="#c8644c"/></linearGradient>
</defs>
<path d="M570.6 333 L570.6 352 L583 414 Q600 423 616 420 Q640 414 648 402 L647.3 333 Z" fill="url(#gPipe)" stroke="#5a2a20" stroke-width="0.8" stroke-linejoin="round" stroke-linecap="round" />
<path d="M647.48 331.66 A38.5 22.2 -2 1 0 570.52 334.34 A38.5 22.2 -2 1 0 647.48 331.66 Z" fill="#ee8a72" stroke="#6a3024" stroke-width="0.8" />
<path d="M640.78 332.08 A32 18 -2 1 0 576.82 334.32 A32 18 -2 1 0 640.78 332.08 Z" fill="url(#gPipeIn)" stroke="#6a3024" stroke-width="0.8" />
<path d="M579 338 Q600 356 634 343" fill="none" stroke="#8a4a3a" stroke-width="0.6" stroke-linejoin="round" stroke-linecap="round" />
<path d="M589 351 L592 357 L590 362" fill="none" stroke="#6a3024" stroke-width="0.8" stroke-linejoin="round" stroke-linecap="round" />
<polygon points="563.0,353.0 568.0,351.5 570.0,356.0 569.0,362.0 564.0,363.0 562.5,358.0" fill="#b9c4d0" stroke="#445" stroke-width="0.6" stroke-linejoin="round" />
<path d="M568 352.5 L581 356.5 Q584.5 366 581.5 375 L568.5 371 Q565.5 361 568 352.5 Z" fill="url(#gLug)" stroke="#6a3024" stroke-width="0.8" stroke-linejoin="round" stroke-linecap="round" />
<path d="M581 356.5 Q584.5 366 581.5 375 L585.5 376.5 Q588.5 367 585.8 357.5 Z" fill="#b45c46" stroke="#6a3024" stroke-width="0.6" stroke-linejoin="round" stroke-linecap="round" />
<path d="M585.8 357.5 L608 362.5 Q612.5 371 608.5 381.5 L585.5 376.5 Q588.5 367 585.8 357.5 Z" fill="url(#gLug)" stroke="#6a3024" stroke-width="0.8" stroke-linejoin="round" stroke-linecap="round" />
<path d="M612.88 372.40 A4.6 9.6 5 1 0 603.72 371.60 A4.6 9.6 5 1 0 612.88 372.40 Z" fill="#d8755c" stroke="#6a3024" stroke-width="0.8" />
<path d="M615.09 372.61 A3.6 6.3 5 1 0 607.91 371.99 A3.6 6.3 5 1 0 615.09 372.61 Z" fill="#6e7276" stroke="#2a2a2a" stroke-width="0.8" />
<path d="M608.5 368 L611 366.5 L611.3 377.5 L608.8 376.5 Z" fill="#c4ccd4" stroke="#445" stroke-width="0.5" stroke-linejoin="round" stroke-linecap="round" />
<polygon points="564.2,376.8 569.2,375.3 571.2,379.8 570.2,385.8 565.2,386.8 563.7,381.8" fill="#b9c4d0" stroke="#445" stroke-width="0.6" stroke-linejoin="round" />
<path d="M569.2 376.3 L582.2 380.3 Q585.7 389.8 582.7 398.8 L569.7 394.8 Q566.7 384.8 569.2 376.3 Z" fill="url(#gLug)" stroke="#6a3024" stroke-width="0.8" stroke-linejoin="round" stroke-linecap="round" />
<path d="M582.2 380.3 Q585.7 389.8 582.7 398.8 L586.7 400.3 Q589.7 390.8 587.0 381.3 Z" fill="#b45c46" stroke="#6a3024" stroke-width="0.6" stroke-linejoin="round" stroke-linecap="round" />
<path d="M587.0 381.3 L609.2 386.3 Q613.7 394.8 609.7 405.3 L586.7 400.3 Q589.7 390.8 587.0 381.3 Z" fill="url(#gLug)" stroke="#6a3024" stroke-width="0.8" stroke-linejoin="round" stroke-linecap="round" />
<path d="M614.08 396.20 A4.6 9.6 5 1 0 604.92 395.40 A4.6 9.6 5 1 0 614.08 396.20 Z" fill="#d8755c" stroke="#6a3024" stroke-width="0.8" />
<path d="M616.29 396.41 A3.6 6.3 5 1 0 609.11 395.79 A3.6 6.3 5 1 0 616.29 396.41 Z" fill="#6e7276" stroke="#2a2a2a" stroke-width="0.8" />
<path d="M609.7 391.8 L612.2 390.3 L612.5 401.3 L610.0 400.3 Z" fill="#c4ccd4" stroke="#445" stroke-width="0.5" stroke-linejoin="round" stroke-linecap="round" />
<polygon points="565.6,400.6 570.6,399.1 572.6,403.6 571.6,409.6 566.6,410.6 565.1,405.6" fill="#b9c4d0" stroke="#445" stroke-width="0.6" stroke-linejoin="round" />
<path d="M570.6 400.1 L583.6 404.1 Q587.1 413.6 584.1 422.6 L571.1 418.6 Q568.1 408.6 570.6 400.1 Z" fill="url(#gLug)" stroke="#6a3024" stroke-width="0.8" stroke-linejoin="round" stroke-linecap="round" />
<path d="M583.6 404.1 Q587.1 413.6 584.1 422.6 L588.1 424.1 Q591.1 414.6 588.4 405.1 Z" fill="#b45c46" stroke="#6a3024" stroke-width="0.6" stroke-linejoin="round" stroke-linecap="round" />
<path d="M588.4 405.1 L610.6 410.1 Q615.1 418.6 611.1 429.1 L588.1 424.1 Q591.1 414.6 588.4 405.1 Z" fill="url(#gLug)" stroke="#6a3024" stroke-width="0.8" stroke-linejoin="round" stroke-linecap="round" />
<path d="M615.48 420.00 A4.6 9.6 5 1 0 606.32 419.20 A4.6 9.6 5 1 0 615.48 420.00 Z" fill="#d8755c" stroke="#6a3024" stroke-width="0.8" />
<path d="M617.69 420.21 A3.6 6.3 5 1 0 610.51 419.59 A3.6 6.3 5 1 0 617.69 420.21 Z" fill="#6e7276" stroke="#2a2a2a" stroke-width="0.8" />
<path d="M611.1 415.6 L613.6 414.1 L613.9 425.1 L611.4 424.1 Z" fill="#c4ccd4" stroke="#445" stroke-width="0.5" stroke-linejoin="round" stroke-linecap="round" />
<polygon points="385.5,470.5 396.0,462.3 472.5,465.3 472.5,474.5 392.0,473.5" fill="#d4eef2" stroke="#3a4a50" stroke-width="0.7" stroke-linejoin="round" />
<polygon points="385.5,470.5 472.5,474.5 472.5,477.5 386.5,473.2" fill="#a9d4dc" stroke="#3a4a50" stroke-width="0.6" stroke-linejoin="round" />
<polygon points="472.6,458.0 516.6,460.2 516.6,495.5 472.6,481.5" fill="#e9e7a3" stroke="#3a3a2a" stroke-width="0.8" stroke-linejoin="round" />
<polygon points="472.6,458.0 475.0,455.5 518.0,458.3 516.6,460.2" fill="#f6f4c6" stroke="#3a3a2a" stroke-width="0.6" stroke-linejoin="round" />
<polyline points="473.0,479.0 516.6,492.5" fill="none" stroke="#8a8850" stroke-width="0.5" stroke-linejoin="round" stroke-linecap="round" />
<path d="M523.5 460.5 L535.5 449" fill="none" stroke="#7a8a94" stroke-width="3.2" stroke-linejoin="round" stroke-linecap="round" />
<path d="M523.5 460.5 L535.5 449" fill="none" stroke="#e4f0f8" stroke-width="1.8" stroke-linejoin="round" stroke-linecap="round" />
<polygon points="517.0,459.5 524.0,460.5 524.0,478.5 517.0,476.5" fill="#e8f4f8" stroke="#3a4a50" stroke-width="0.7" stroke-linejoin="round" />
<polygon points="526.0,462.0 531.5,461.0 533.0,466.0 532.0,471.0 527.0,472.5 525.5,467.0" fill="#b8b8c0" stroke="#333" stroke-width="0.6" stroke-linejoin="round" />
<polygon points="661.2,508.7 669.7,505.2 681.0,507.4 668.4,512.2" fill="#e6e4a2" stroke="#3a3a2a" stroke-width="0.6" stroke-linejoin="round" />
<polygon points="517.0,471.8 666.7,513.0 666.0,518.3 518.5,477.2" fill="#dff3f5" stroke="#3a4a50" stroke-width="0.7" stroke-linejoin="round" />
<polygon points="518.5,477.2 666.0,518.3 666.0,549.2 518.8,506.3" fill="#bfe6ea" stroke="#3a4a50" stroke-width="0.8" stroke-linejoin="round" />
<polygon points="516.5,472.5 518.8,477.2 518.8,506.3 516.5,503.0" fill="#e8f6f8" stroke="#3a4a50" stroke-width="0.6" stroke-linejoin="round" />
<polygon points="666.0,518.3 669.3,517.0 669.3,550.3 666.0,549.2" fill="#d2ecf0" stroke="#3a4a50" stroke-width="0.6" stroke-linejoin="round" />
<polygon points="669.3,517.0 691.0,511.0 691.6,543.2 669.3,550.3" fill="#9ccad2" stroke="#3a4a50" stroke-width="0.8" stroke-linejoin="round" />
<polygon points="666.7,513.0 689.5,506.5 691.0,511.0 669.3,517.0 666.0,518.3" fill="#d5eef2" stroke="#3a4a50" stroke-width="0.7" stroke-linejoin="round" />
<polygon points="689.0,505.0 700.0,497.3 703.8,500.2 693.5,510.5 691.0,511.0" fill="#b5dbe4" stroke="#3a4a50" stroke-width="0.7" stroke-linejoin="round" />
<path d="M741 492 L756 487 L756 503 L741 508 Z" fill="none" stroke="#4ab0d8" stroke-width="0.6" stroke-linejoin="round" stroke-linecap="round" />
<path d="M748 480 V508 M738 501 L760 492" fill="none" stroke="#58d830" stroke-width="0.8" stroke-linejoin="round" stroke-linecap="round" />
<path d="M741 487 L752 513 M752 486 L744 513 M739 497 L758 512" fill="none" stroke="#40a8e0" stroke-width="0.7" stroke-linejoin="round" stroke-linecap="round" />
<path d="M746 500 L766 509 M750 496 L762 489" fill="none" stroke="#e08070" stroke-width="0.6" stroke-linejoin="round" stroke-linecap="round" />
<path d="M743 493 L744 504 M753 489 L754 500" fill="none" stroke="#e0b060" stroke-width="0.6" stroke-linejoin="round" stroke-linecap="round" />
<path d="M202 710.3 L201.2 696 L201.7 692.5 L202.9 696 L203.4 704 Z" fill="#2fc43a" stroke="#2fc43a" stroke-width="1.2" stroke-linejoin="round" stroke-linecap="round" />
<path d="M202 710.3 L210 711.2 L219.5 715.6 L212 716.2 Z" fill="#cc1414" stroke="#cc1414" stroke-width="1.0" stroke-linejoin="round" stroke-linecap="round" />
<path d="M202 710.3 L198.5 711.5 L192.5 718.8 L197.5 716.5 Z" fill="#2a9be6" stroke="#2a9be6" stroke-width="1.0" stroke-linejoin="round" stroke-linecap="round" />
<text x="199.6" y="690.2" font-family="Liberation Sans" font-size="6.2" fill="#7fd47f">Y</text>
<text x="221.2" y="720.2" font-family="Liberation Sans" font-size="6.2" fill="#a03c3c">X</text>
<text x="187.2" y="724.2" font-family="Liberation Sans" font-size="6.2" fill="#7090a8">Z</text>
</svg>
</div>
<div class="a" style="left:36px;top:748px;width:1px;height:36px;background:repeating-linear-gradient(to bottom,#bdbdbd 0 1px,transparent 1px 2px);"></div>
<div class="a" style="left:38.5px;top:746.5px;width:1220px;height:23.5px;border:1px solid #c4c4c4;border-bottom:1.4px solid #3c3c3c;box-sizing:border-box;background:#f0f0f0;"></div>
<div class="a" style="left:36px;top:771px;width:1225px;height:17px;background:#f5f5f5;"></div>
<div class="a" style="left:0;top:788.5px;width:1280px;height:10px;background:#f0f0f0;border-top:1px solid #b8b8b8;box-sizing:border-box;"></div>
<div class="a" style="left:2px;top:789px;width:1px;height:9px;background:#c8c8c8;"></div>
<div class="a" style="left:1222.5px;top:789px;width:1.5px;height:9px;background:#c0c0c0;"></div>
<div class="a" style="left:1278.5px;top:789px;width:1.5px;height:9px;background:#c0c0c0;"></div>
<div class="t" style="left:4.5px;top:789.6px;font-size:8.35px;color:#111;letter-spacing:-0.026px;">Щелкните левой кнопкой мыши на объекте для его выделения (вместе с Ctrl - добавить к выделенным)</div>
<div class="a" style="left:0;top:798px;width:1280px;height:2px;background:linear-gradient(#b4bfcc,#8596ab);"></div>
</body></html>
